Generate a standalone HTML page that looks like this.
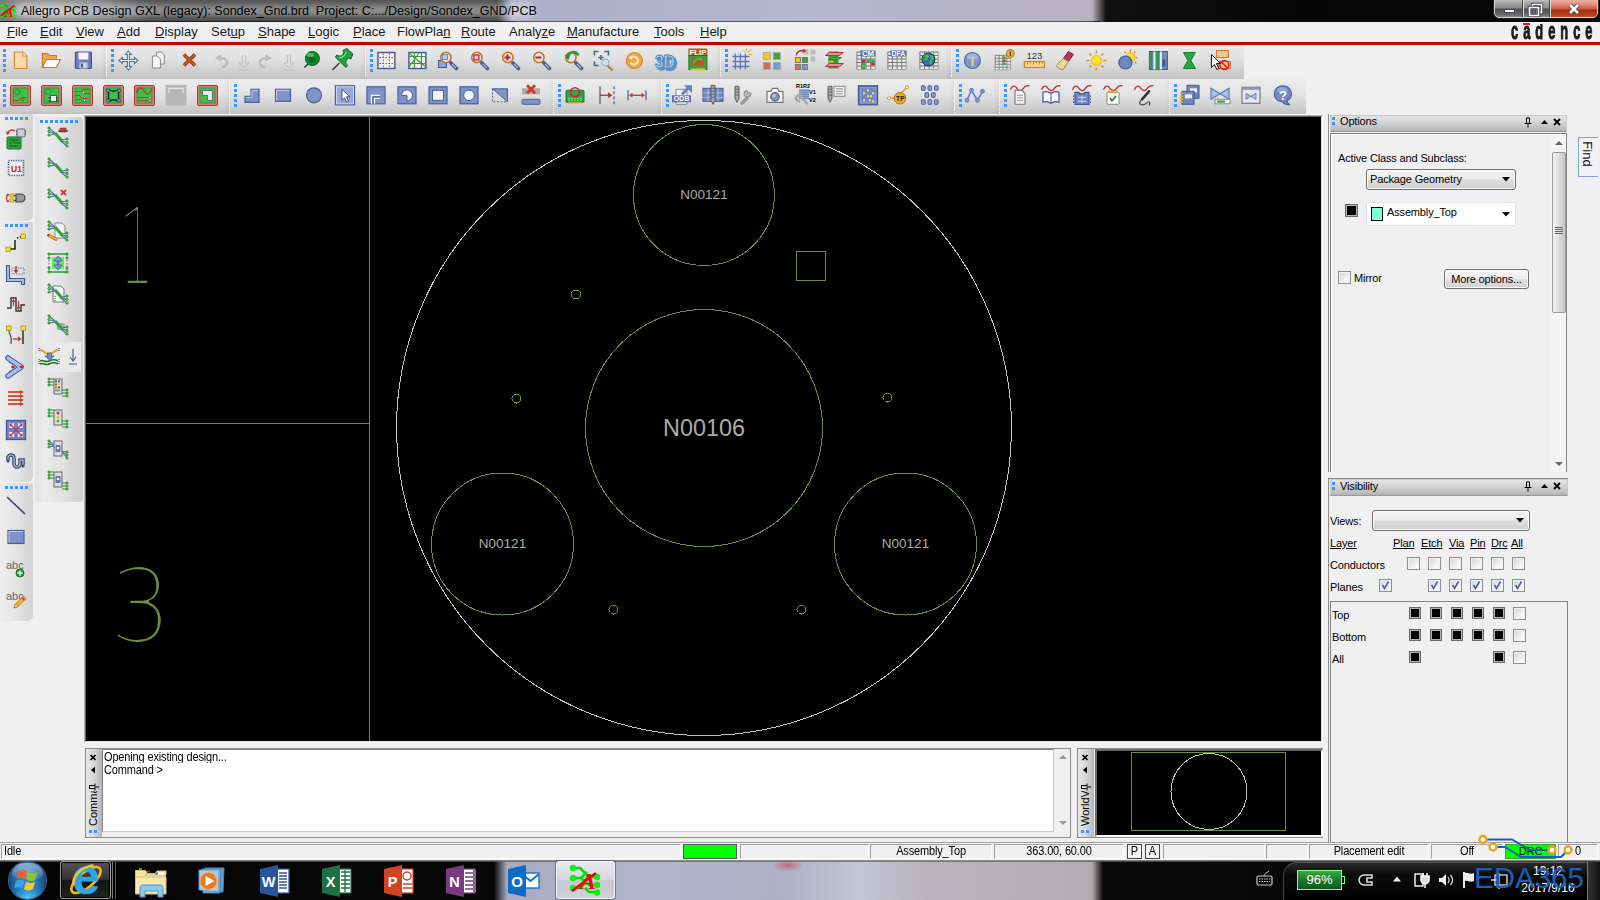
<!DOCTYPE html><html><head><meta charset="utf-8"><title>Allegro PCB Design GXL</title><style>
html,body{margin:0;padding:0}
body{width:1600px;height:900px;overflow:hidden;background:#f0f0f0;position:relative;font-family:"Liberation Sans",sans-serif;font-size:11px;color:#000}
div{position:absolute;box-sizing:border-box}
svg{position:absolute;overflow:visible}
.t{white-space:nowrap;line-height:1}
.tb{background:linear-gradient(#eaeaea,#e2e2e2 45%,#d2d2d2 80%,#c4c4c4);border-radius:3px}
.tbv{background:linear-gradient(90deg,#ededed,#e6e6e6 40%,#d2d2d2);border-radius:3px}
.cap{background:linear-gradient(#e4e4e4,#d0d0d0 50%,#b4b4b4)}
.cb{width:13px;height:13px;border:1px solid #8e8f8f;background:linear-gradient(135deg,#cfd4dc,#f4f6f8 70%);box-shadow:inset 0 0 0 1px #f4f4f4}
.bs{width:12px;height:12px;background:#000;border:1px solid #6a6a6a;box-shadow:inset 0 0 0 1px #b4b4b4}
.u{text-decoration:underline}
.sep{width:2px;border-left:1px solid #a0a0a0;border-right:1px solid #fff}
</style></head><body><div style="left:0px;top:0px;width:1600px;height:22px;background:linear-gradient(90deg,#2e2e2e 0,#2a2a2a 495px,#abadc6 512px,#b0b2cc 640px,#b5b6d0 800px,#b6b4c8 950px,#b8b2c0 1092px,#111 1106px,#050505 1300px,#080808 1600px)"></div><div style="left:0px;top:0px;width:505px;height:22px;background:linear-gradient(#444 0,#3a3a3a 3px,#2e2e2e 10px,#303030 18px,#3c3c3c 21px);-webkit-mask-image:linear-gradient(90deg,#000 490px,transparent 505px);mask-image:linear-gradient(90deg,#000 490px,transparent 505px)"></div><div style="left:-30px;top:-12px;width:190px;height:46px;background:radial-gradient(ellipse at 40% 50%,rgba(255,255,255,.62),rgba(255,255,255,.3) 45%,rgba(255,255,255,0) 70%)"></div><div style="left:14px;top:4px;width:520px;height:13px;background:#fff;filter:blur(4px);border-radius:7px;opacity:.5"></div><div style="left:0px;top:21px;width:1100px;height:1px;background:linear-gradient(90deg,#1a1a1a 500px,#55556a 520px,#55556a 1085px,#111 1100px)"></div><svg style="left:0;top:3px" width="17" height="15.3" viewBox="0 0 20 18"><g stroke="#0c0" stroke-width="2.2" fill="none"><path d="M2 3h5l4 5h6M2 9h6M2 15h6l4-5"/></g><g fill="#1e1"><circle cx="2.5" cy="3" r="2"/><circle cx="2.5" cy="9" r="2"/><circle cx="2.5" cy="15" r="2"/><circle cx="17" cy="5" r="2"/><circle cx="17" cy="15.5" r="2"/><circle cx="17" cy="10" r="2"/></g><path d="M1 15 L17 3" stroke="#e00" stroke-width="2"/><text x="6" y="16" font-family="Liberation Serif,serif" font-style="italic" font-weight="bold" font-size="15" fill="#e01010">A</text></svg><div class="t" style="left:21px;top:2px;width:540px;height:18px;font-size:12.5px;line-height:18px;color:#000">Allegro PCB Design GXL (legacy): Sondex_Gnd.brd&nbsp; Project: C:.../Design/Sondex_GND/PCB</div><div style="left:1494px;top:-1px;width:104px;height:19px;border:1px solid #d0d0d0;border-radius:0 0 5px 5px;background:linear-gradient(#c0c0c0,#a4a4a4 20%,#8a8a8a 48%,#4e4e4e 52%,#6a6a6a 85%,#8a8a8a);overflow:hidden;box-shadow:0 0 0 1px #222"><div style="left:27px;top:0;width:2px;height:19px;background:#ddd;border-left:1px solid #444"></div><div style="left:54px;top:0;width:2px;height:19px;background:#ddd;border-left:1px solid #444"></div><div style="left:56px;top:0;width:47px;height:19px;background:linear-gradient(#f0b0a0,#dc8c78 25%,#c8583e 48%,#a42810 52%,#b8401e 80%,#d87850)"></div><svg style="left:0;top:0" width="104" height="19" viewBox="0 0 104 19"><rect x="9.5" y="9.5" width="10" height="3" fill="#fff" stroke="#445" stroke-width="1"/><g fill="none"><path d="M37.5 4.500h9v8h-9z" stroke="#445" stroke-width="3.4"/><path d="M37.5 4.500h9v8h-9z" stroke="#fff" stroke-width="1.6"/><path d="M34.5 7.500h9v8h-9z" fill="#888" stroke="#445" stroke-width="3.4"/><path d="M34.5 7.500h9v8h-9z" stroke="#fff" stroke-width="1.6"/><rect x="37.5" y="10" width="3" height="3" fill="#777" stroke="#445" stroke-width="1"/></g><path d="M75 5l8 8M83 5l-8 8" stroke="#445" stroke-width="4.4"/><path d="M75 5l8 8M83 5l-8 8" stroke="#fff" stroke-width="2.6"/></svg></div><div style="left:0px;top:22px;width:1600px;height:20px;background:#f0f0f0"></div><div class="t" style="left:7px;top:24px;width:80px;height:16px;font-size:13px;line-height:16px;color:#1a1a1a"><span class="u">F</span>ile</div><div class="t" style="left:40px;top:24px;width:80px;height:16px;font-size:13px;line-height:16px;color:#1a1a1a"><span class="u">E</span>dit</div><div class="t" style="left:76px;top:24px;width:80px;height:16px;font-size:13px;line-height:16px;color:#1a1a1a"><span class="u">V</span>iew</div><div class="t" style="left:117px;top:24px;width:80px;height:16px;font-size:13px;line-height:16px;color:#1a1a1a"><span class="u">A</span>dd</div><div class="t" style="left:155px;top:24px;width:80px;height:16px;font-size:13px;line-height:16px;color:#1a1a1a"><span class="u">D</span>isplay</div><div class="t" style="left:211px;top:24px;width:80px;height:16px;font-size:13px;line-height:16px;color:#1a1a1a">Set<span class="u">u</span>p</div><div class="t" style="left:258px;top:24px;width:80px;height:16px;font-size:13px;line-height:16px;color:#1a1a1a"><span class="u">S</span>hape</div><div class="t" style="left:308px;top:24px;width:80px;height:16px;font-size:13px;line-height:16px;color:#1a1a1a"><span class="u">L</span>ogic</div><div class="t" style="left:353px;top:24px;width:80px;height:16px;font-size:13px;line-height:16px;color:#1a1a1a"><span class="u">P</span>lace</div><div class="t" style="left:397px;top:24px;width:80px;height:16px;font-size:13px;line-height:16px;color:#1a1a1a">FlowPla<span class="u">n</span></div><div class="t" style="left:461px;top:24px;width:80px;height:16px;font-size:13px;line-height:16px;color:#1a1a1a"><span class="u">R</span>oute</div><div class="t" style="left:509px;top:24px;width:80px;height:16px;font-size:13px;line-height:16px;color:#1a1a1a">Analy<span class="u">z</span>e</div><div class="t" style="left:567px;top:24px;width:80px;height:16px;font-size:13px;line-height:16px;color:#1a1a1a"><span class="u">M</span>anufacture</div><div class="t" style="left:654px;top:24px;width:80px;height:16px;font-size:13px;line-height:16px;color:#1a1a1a"><span class="u">T</span>ools</div><div class="t" style="left:700px;top:24px;width:80px;height:16px;font-size:13px;line-height:16px;color:#1a1a1a"><span class="u">H</span>elp</div><div style="left:1510px;top:24px;width:90px;height:17px;overflow:hidden"><div class="t" style="left:1px;top:-3.700px;font-size:16px;line-height:16px;letter-spacing:6.300px;font-weight:bold;color:#1a1a1a;-webkit-text-stroke:.7px #1a1a1a;transform:scale(.8,1.45);transform-origin:0 0">c&#257;dence</div></div><div style="left:1523px;top:23px;width:7px;height:2px;background:#e02020"></div><div style="left:0px;top:42px;width:1600px;height:3px;background:#c80000"></div><div style="left:0px;top:45px;width:1244px;height:34px;background:linear-gradient(#e9e9e9,#e2e2e2 40%,#d0d0d0 75%,#c4c4c4)"></div><div style="left:3px;top:49px;width:3px;height:3px;background:#3d95ff"></div><div style="left:3px;top:54px;width:3px;height:3px;background:#3d95ff"></div><div style="left:3px;top:59px;width:3px;height:3px;background:#3d95ff"></div><div style="left:3px;top:64px;width:3px;height:3px;background:#3d95ff"></div><div style="left:3px;top:69px;width:3px;height:3px;background:#3d95ff"></div><div style="left:111px;top:49px;width:3px;height:3px;background:#3d95ff"></div><div style="left:111px;top:54px;width:3px;height:3px;background:#3d95ff"></div><div style="left:111px;top:59px;width:3px;height:3px;background:#3d95ff"></div><div style="left:111px;top:64px;width:3px;height:3px;background:#3d95ff"></div><div style="left:111px;top:69px;width:3px;height:3px;background:#3d95ff"></div><div style="left:101px;top:45px;width:5px;height:34px;background:linear-gradient(90deg,rgba(0,0,0,0),rgba(0,0,0,.05))"></div><div style="left:106px;top:46px;width:1px;height:32px;background:repeating-linear-gradient(#fff 0 1px,transparent 1px 2px)"></div><div style="left:370px;top:49px;width:3px;height:3px;background:#3d95ff"></div><div style="left:370px;top:54px;width:3px;height:3px;background:#3d95ff"></div><div style="left:370px;top:59px;width:3px;height:3px;background:#3d95ff"></div><div style="left:370px;top:64px;width:3px;height:3px;background:#3d95ff"></div><div style="left:370px;top:69px;width:3px;height:3px;background:#3d95ff"></div><div style="left:360px;top:45px;width:5px;height:34px;background:linear-gradient(90deg,rgba(0,0,0,0),rgba(0,0,0,.05))"></div><div style="left:365px;top:46px;width:1px;height:32px;background:repeating-linear-gradient(#fff 0 1px,transparent 1px 2px)"></div><div style="left:725px;top:49px;width:3px;height:3px;background:#3d95ff"></div><div style="left:725px;top:54px;width:3px;height:3px;background:#3d95ff"></div><div style="left:725px;top:59px;width:3px;height:3px;background:#3d95ff"></div><div style="left:725px;top:64px;width:3px;height:3px;background:#3d95ff"></div><div style="left:725px;top:69px;width:3px;height:3px;background:#3d95ff"></div><div style="left:715px;top:45px;width:5px;height:34px;background:linear-gradient(90deg,rgba(0,0,0,0),rgba(0,0,0,.05))"></div><div style="left:720px;top:46px;width:1px;height:32px;background:repeating-linear-gradient(#fff 0 1px,transparent 1px 2px)"></div><div style="left:956px;top:49px;width:3px;height:3px;background:#3d95ff"></div><div style="left:956px;top:54px;width:3px;height:3px;background:#3d95ff"></div><div style="left:956px;top:59px;width:3px;height:3px;background:#3d95ff"></div><div style="left:956px;top:64px;width:3px;height:3px;background:#3d95ff"></div><div style="left:956px;top:69px;width:3px;height:3px;background:#3d95ff"></div><div style="left:946px;top:45px;width:5px;height:34px;background:linear-gradient(90deg,rgba(0,0,0,0),rgba(0,0,0,.05))"></div><div style="left:951px;top:46px;width:1px;height:32px;background:repeating-linear-gradient(#fff 0 1px,transparent 1px 2px)"></div><div style="left:0px;top:79px;width:1306px;height:35px;background:linear-gradient(#ececec,#e4e4e4 40%,#d2d2d2 75%,#c2c2c2)"></div><div style="left:3px;top:84px;width:3px;height:3px;background:#3d95ff"></div><div style="left:3px;top:89px;width:3px;height:3px;background:#3d95ff"></div><div style="left:3px;top:94px;width:3px;height:3px;background:#3d95ff"></div><div style="left:3px;top:99px;width:3px;height:3px;background:#3d95ff"></div><div style="left:3px;top:104px;width:3px;height:3px;background:#3d95ff"></div><div style="left:234px;top:84px;width:3px;height:3px;background:#3d95ff"></div><div style="left:234px;top:89px;width:3px;height:3px;background:#3d95ff"></div><div style="left:234px;top:94px;width:3px;height:3px;background:#3d95ff"></div><div style="left:234px;top:99px;width:3px;height:3px;background:#3d95ff"></div><div style="left:234px;top:104px;width:3px;height:3px;background:#3d95ff"></div><div style="left:224px;top:79px;width:5px;height:35px;background:linear-gradient(90deg,rgba(0,0,0,0),rgba(0,0,0,.05))"></div><div style="left:229px;top:80px;width:1px;height:33px;background:repeating-linear-gradient(#fff 0 1px,transparent 1px 2px)"></div><div style="left:558px;top:84px;width:3px;height:3px;background:#3d95ff"></div><div style="left:558px;top:89px;width:3px;height:3px;background:#3d95ff"></div><div style="left:558px;top:94px;width:3px;height:3px;background:#3d95ff"></div><div style="left:558px;top:99px;width:3px;height:3px;background:#3d95ff"></div><div style="left:558px;top:104px;width:3px;height:3px;background:#3d95ff"></div><div style="left:548px;top:79px;width:5px;height:35px;background:linear-gradient(90deg,rgba(0,0,0,0),rgba(0,0,0,.05))"></div><div style="left:553px;top:80px;width:1px;height:33px;background:repeating-linear-gradient(#fff 0 1px,transparent 1px 2px)"></div><div style="left:666px;top:84px;width:3px;height:3px;background:#3d95ff"></div><div style="left:666px;top:89px;width:3px;height:3px;background:#3d95ff"></div><div style="left:666px;top:94px;width:3px;height:3px;background:#3d95ff"></div><div style="left:666px;top:99px;width:3px;height:3px;background:#3d95ff"></div><div style="left:666px;top:104px;width:3px;height:3px;background:#3d95ff"></div><div style="left:656px;top:79px;width:5px;height:35px;background:linear-gradient(90deg,rgba(0,0,0,0),rgba(0,0,0,.05))"></div><div style="left:661px;top:80px;width:1px;height:33px;background:repeating-linear-gradient(#fff 0 1px,transparent 1px 2px)"></div><div style="left:959px;top:84px;width:3px;height:3px;background:#3d95ff"></div><div style="left:959px;top:89px;width:3px;height:3px;background:#3d95ff"></div><div style="left:959px;top:94px;width:3px;height:3px;background:#3d95ff"></div><div style="left:959px;top:99px;width:3px;height:3px;background:#3d95ff"></div><div style="left:959px;top:104px;width:3px;height:3px;background:#3d95ff"></div><div style="left:949px;top:79px;width:5px;height:35px;background:linear-gradient(90deg,rgba(0,0,0,0),rgba(0,0,0,.05))"></div><div style="left:954px;top:80px;width:1px;height:33px;background:repeating-linear-gradient(#fff 0 1px,transparent 1px 2px)"></div><div style="left:1004px;top:84px;width:3px;height:3px;background:#3d95ff"></div><div style="left:1004px;top:89px;width:3px;height:3px;background:#3d95ff"></div><div style="left:1004px;top:94px;width:3px;height:3px;background:#3d95ff"></div><div style="left:1004px;top:99px;width:3px;height:3px;background:#3d95ff"></div><div style="left:1004px;top:104px;width:3px;height:3px;background:#3d95ff"></div><div style="left:994px;top:79px;width:5px;height:35px;background:linear-gradient(90deg,rgba(0,0,0,0),rgba(0,0,0,.05))"></div><div style="left:999px;top:80px;width:1px;height:33px;background:repeating-linear-gradient(#fff 0 1px,transparent 1px 2px)"></div><div style="left:1174px;top:84px;width:3px;height:3px;background:#3d95ff"></div><div style="left:1174px;top:89px;width:3px;height:3px;background:#3d95ff"></div><div style="left:1174px;top:94px;width:3px;height:3px;background:#3d95ff"></div><div style="left:1174px;top:99px;width:3px;height:3px;background:#3d95ff"></div><div style="left:1174px;top:104px;width:3px;height:3px;background:#3d95ff"></div><div style="left:1164px;top:79px;width:5px;height:35px;background:linear-gradient(90deg,rgba(0,0,0,0),rgba(0,0,0,.05))"></div><div style="left:1169px;top:80px;width:1px;height:33px;background:repeating-linear-gradient(#fff 0 1px,transparent 1px 2px)"></div><svg style="left:8px;top:49px" width="24" height="24" viewBox="-12 -12 24 24"><g transform="translate(.4,-.5)"><path d="M-6 -8.5h8.5l4 4v12.5h-12.5z" fill="#f7dca6" stroke="#d58a30" stroke-width="1.2"/><path d="M2.5 -8.5v4h4" fill="#fff3d8" stroke="#d58a30" stroke-width="1"/></g></svg><svg style="left:39px;top:49px" width="24" height="24" viewBox="-12 -12 24 24"><g transform="translate(.4,-.5)"><path d="M-9 7v-14h5l2 2h7v3" fill="#f0a850" stroke="#c87820" stroke-width="1.2"/><path d="M-9 7l4 -8h14l-4 8z" fill="#fff" stroke="#c87820" stroke-width="1.2"/></g></svg><svg style="left:71px;top:49px" width="24" height="24" viewBox="-12 -12 24 24"><g transform="translate(.4,-.5)"><rect x="-8" y="-8.5" width="16" height="16.5" rx="1" fill="#6c7fc0" stroke="#44558f" stroke-width="1.2"/><rect x="-5" y="-8" width="10" height="7" fill="#f4f4fa"/><rect x="-4" y="2" width="8" height="6" fill="#c8d0ea"/><rect x="-2.5" y="3" width="2" height="4" fill="#44558f"/></g></svg><svg style="left:116px;top:49px" width="24" height="24" viewBox="-12 -12 24 24"><g transform="translate(.4,-.5)"><path d="M0 -9.5l3 3.5h-2v5h5v-2l3.5 3l-3.5 3v-2h-5v5h2l-3 3.5l-3 -3.5h2v-5h-5v2l-3.5 -3l3.5 -3v2h5v-5h-2z" fill="#e8f0f8" stroke="#52749a" stroke-width="1.1"/></g></svg><svg style="left:146px;top:49px" width="24" height="24" viewBox="-12 -12 24 24"><g transform="translate(.4,-.5)"><path d="M-2 -8.5h5l3 3v9h-8z" fill="#f2f2f2" stroke="#8a8a8a"/><path d="M-6 -4.5h5l3 3v9h-8z" fill="#f8f8f8" stroke="#8a8a8a"/></g></svg><svg style="left:177px;top:49px" width="24" height="24" viewBox="-12 -12 24 24"><g transform="translate(.4,-.5)"><path d="M-5.5 -6l11 11M5.5 -6l-11 11" stroke="#8a3208" stroke-width="3.4"/><path d="M-5.5 -6l11 11M5.5 -6l-11 11" stroke="#d8601c" stroke-width="1.6"/></g></svg><svg style="left:208px;top:49px" width="24" height="24" viewBox="-12 -12 24 24"><g transform="translate(.4,-.5)"><path d="M0 -2.5C5 -3,8 1,6 4S3 6.5,1.5 6.5" fill="none" stroke="#bcbcbc" stroke-width="2.4"/><path d="M-5.5 -2.5l6.5 -4v7.5z" fill="#bcbcbc"/></g></svg><svg style="left:231px;top:49px" width="24" height="24" viewBox="-12 -12 24 24"><g transform="translate(.4,-.5)"><path d="M-1 -5.5v8h-3.5l5 5l5 -5h-3.5v-8M-4.5 9.5h10" fill="none" stroke="#bdbdbd" stroke-width="1"/></g></svg><svg style="left:254px;top:49px" width="24" height="24" viewBox="-12 -12 24 24"><g transform="translate(.4,-.5)"><path d="M0 -2.5C-5 -3,-8 1,-6 4S-3 6.5,-1.5 6.5" fill="none" stroke="#bcbcbc" stroke-width="2.4"/><path d="M5.5 -2.5l-6.5 -4v7.5z" fill="#bcbcbc"/></g></svg><svg style="left:276px;top:49px" width="24" height="24" viewBox="-12 -12 24 24"><g transform="translate(.4,-.5)"><path d="M-1 -5.5v8h-3.5l5 5l5 -5h-3.5v-8M-4.5 9.5h10" fill="none" stroke="#bdbdbd" stroke-width="1"/></g></svg><svg style="left:299px;top:49px" width="24" height="24" viewBox="-12 -12 24 24"><g transform="translate(.4,-.5)"><path d="M-7 7l4 -4" stroke="#333" stroke-width="1.5"/><circle cx="1" cy="-2" r="7" fill="#138a2a" stroke="#0a5c18" stroke-width="1"/><path d="M1 -6a4 4 0 1 0 4 4h-4z" fill="#0c6a1e"/><ellipse cx="-1" cy="-5.5" rx="3.5" ry="2" fill="#6fd080" opacity=".7"/></g></svg><svg style="left:330px;top:49px" width="24" height="24" viewBox="-12 -12 24 24"><g transform="translate(.4,-.5)"><path d="M-10 9.5l7 -7" stroke="#3a3a3a" stroke-width="1.5"/><path d="M-7 -3.5L3.5 7L5 5C2.5 2,3.5 0,6 -2.5L8.5 -1.5L10.5 -6.5L4.5 -12L.5 -10L1.5 -7.5C-.5 -4.5,-2.5 -3.5,-5.5 -5.5Z" fill="#22a040" stroke="#0c6420" stroke-width="1"/><path d="M-3.5 -2.5C0 -3,3 -5,4 -9" fill="none" stroke="#7ad890" stroke-width="1.2"/></g></svg><svg style="left:374px;top:49px" width="24" height="24" viewBox="-12 -12 24 24"><g transform="translate(.4,-.5)"><rect x="-8.5" y="-8" width="17" height="16" fill="#f4eeee" stroke="#44588e" stroke-width="1.4"/><path d="M-7 -3h14M-7 3h14M-3 -7v14M3 -7v14" stroke="#c04040" stroke-width="1" stroke-dasharray="1.5 1.5"/></g></svg><svg style="left:405px;top:49px" width="24" height="24" viewBox="-12 -12 24 24"><g transform="translate(.4,-.5)"><rect x="-8.5" y="-8" width="17" height="16" fill="#f4f4f4" stroke="#44588e" stroke-width="1.4"/><path d="M-8 -4h16M-8 3h16M-3 -8v16M4 -8v16M-8 -7l16 13M-8 6l10 -14" stroke="#3a9a3a" stroke-width="1.2"/></g></svg><svg style="left:436px;top:49px" width="24" height="24" viewBox="-12 -12 24 24"><g transform="translate(.4,-.5)"><rect x="-10" y="0" width="8" height="7" fill="#8fa2d8" stroke="#44588e"/><path d="M2.5 2.5 L8 8" stroke="#4a5f90" stroke-width="3.8" stroke-linecap="round"/><path d="M3.5 3.5 L7.5 7.5" stroke="#a8b8d8" stroke-width="1.2"/><circle cx="-2.5" cy="-3" r="5.2" fill="#e4e4f0" stroke="#c07830" stroke-width="1.6"/><rect x="-6" y="-6" width="5" height="5" fill="#b8c4e8" stroke="#6678b0" stroke-width=".8"/></g></svg><svg style="left:467px;top:49px" width="24" height="24" viewBox="-12 -12 24 24"><g transform="translate(.4,-.5)"><path d="M2.5 2.5 L8 8" stroke="#4a5f90" stroke-width="3.8" stroke-linecap="round"/><path d="M3.5 3.5 L7.5 7.5" stroke="#a8b8d8" stroke-width="1.2"/><circle cx="-2.5" cy="-3" r="5.2" fill="#e4e4f0" stroke="#c07830" stroke-width="1.6"/><rect x="-5.5" y="-5.5" width="5" height="5" fill="#f4c8c8" stroke="#c02020" stroke-width="1.2"/></g></svg><svg style="left:498px;top:49px" width="24" height="24" viewBox="-12 -12 24 24"><g transform="translate(.4,-.5)"><path d="M2.5 2.5 L8 8" stroke="#4a5f90" stroke-width="3.8" stroke-linecap="round"/><path d="M3.5 3.5 L7.5 7.5" stroke="#a8b8d8" stroke-width="1.2"/><circle cx="-2.5" cy="-3" r="5.2" fill="#e4e4f0" stroke="#c07830" stroke-width="1.6"/><path d="M-6 -3h6M-3 -6v6" stroke="#c82020" stroke-width="2"/></g></svg><svg style="left:529px;top:49px" width="24" height="24" viewBox="-12 -12 24 24"><g transform="translate(.4,-.5)"><path d="M2.5 2.5 L8 8" stroke="#4a5f90" stroke-width="3.8" stroke-linecap="round"/><path d="M3.5 3.5 L7.5 7.5" stroke="#a8b8d8" stroke-width="1.2"/><circle cx="-2.5" cy="-3" r="5.2" fill="#e4e4f0" stroke="#c07830" stroke-width="1.6"/><path d="M-6 -3h6" stroke="#c82020" stroke-width="2"/></g></svg><svg style="left:561px;top:49px" width="24" height="24" viewBox="-12 -12 24 24"><g transform="translate(.4,-.5)"><path d="M2.5 2.5 L8 8" stroke="#4a5f90" stroke-width="3.8" stroke-linecap="round"/><path d="M3.5 3.5 L7.5 7.5" stroke="#a8b8d8" stroke-width="1.2"/><circle cx="-2.5" cy="-3" r="5.2" fill="#e4e4f0" stroke="#c07830" stroke-width="1.6"/><path d="M-6 -2c0 -6,8 -9,11 -3" fill="none" stroke="#2a9a3a" stroke-width="2.6"/><path d="M-9 -5l6 -1l-2 6z" fill="#2a9a3a"/></g></svg><svg style="left:591px;top:49px" width="24" height="24" viewBox="-12 -12 24 24"><g transform="translate(.4,-.5)"><path d="M-9 -5v-4h4M1 -9h4v4M-9 1v4h4" fill="none" stroke="#44688e" stroke-width="1.6"/><path d="M-5 -3h5M-2.5 -5.5v5" stroke="#44688e" stroke-width="1.4"/><path d="M4 5l5 5" stroke="#c87820" stroke-width="2"/><circle cx="2" cy="2" r="3.6" fill="#cfe0f4" stroke="#8ab" stroke-width="1"/></g></svg><svg style="left:622px;top:49px" width="24" height="24" viewBox="-12 -12 24 24"><g transform="translate(.4,-.5)"><circle cx="0" cy="0" r="8" fill="#f4a440" stroke="#e08820" stroke-width="1.2"/><path d="M-3 -3a4 4 0 1 1 -1 5" fill="none" stroke="#fff0d8" stroke-width="2"/><path d="M-6 -3.5l5 -1l-2 4z" fill="#fff0d8"/></g></svg><svg style="left:653px;top:49px" width="24" height="24" viewBox="-12 -12 24 24"><g transform="translate(.4,-.5)"><text x="-8.5" y="9.5" font-family="Liberation Sans,sans-serif" font-weight="bold" font-size="19" textLength="20" lengthAdjust="spacingAndGlyphs" fill="#6a9cc8" stroke="#5a8cb8" stroke-width="1.5">3D</text><text x="-10.5" y="7.5" font-family="Liberation Sans,sans-serif" font-weight="bold" font-size="19" textLength="20" lengthAdjust="spacingAndGlyphs" fill="#b8d4f0" stroke="#4a86c0" stroke-width="1">3D</text></g></svg><svg style="left:685px;top:49px" width="24" height="24" viewBox="-12 -12 24 24"><g transform="translate(.4,-.5)"><rect x="-9" y="-12" width="19" height="7" fill="#b85a10"/><text x="-8" y="-6" font-family="Liberation Sans,sans-serif" font-weight="bold" font-size="7" textLength="17" lengthAdjust="spacingAndGlyphs" fill="#fff">FLIP</text><rect x="-8.5" y="-5" width="18" height="14" fill="#2fa840" stroke="#18702a"/><rect x="-6" y="-3" width="13" height="8" fill="#c05030"/><path d="M-4 3c1 -5,6 -5,9 -4" stroke="#3c3" stroke-width="2" fill="none"/><rect x="-7" y="8" width="15" height="2" fill="#f0c020"/></g></svg><svg style="left:729px;top:49px" width="24" height="24" viewBox="-12 -12 24 24"><g transform="translate(.4,-.5)"><path d="M-9 -4h17M-9 1h17M-9 6h17M-6 -7v16M-1 -7v16M4 -7v16" stroke="#5a74b8" stroke-width="1.3"/><path d="M6 -8l4 -3M7 -6h4M5 -9v-3M4 -8l-2 -2" stroke="#f0a020" stroke-width="1"/></g></svg><svg style="left:760px;top:49px" width="24" height="24" viewBox="-12 -12 24 24"><g transform="translate(.4,-.5)"><rect x="-9" y="-8" width="7" height="7" fill="#f8c818" stroke="#aaa"/><rect x="1" y="-8" width="7" height="7" fill="#38a838" stroke="#aaa"/><rect x="-9" y="2" width="7" height="7" fill="#d07048" stroke="#aaa"/><rect x="1" y="2" width="7" height="7" fill="#7a98d8" stroke="#aaa"/></g></svg><svg style="left:791px;top:49px" width="24" height="24" viewBox="-12 -12 24 24"><g transform="translate(.4,-.5)"><rect x="0" y="-11" width="5" height="5" fill="#bbb"/><rect x="7" y="-11" width="5" height="5" fill="#bbb"/><rect x="7" y="-4" width="5" height="5" fill="#bbb"/><rect x="-8" y="-3" width="5" height="5" fill="#f8c818" stroke="#777"/><rect x="-1" y="-3" width="5" height="5" fill="#38a838" stroke="#777"/><rect x="-8" y="4" width="5" height="5" fill="#d07048" stroke="#777"/><rect x="-1" y="4" width="5" height="5" fill="#7a98d8" stroke="#777"/><path d="M-7 -5c0 -4,4 -5,7 -5" fill="none" stroke="#c03030" stroke-width="1.4"/><path d="M0 -12l3 2.5l-4 2z" fill="#c03030"/></g></svg><svg style="left:822px;top:49px" width="24" height="24" viewBox="-12 -12 24 24"><g transform="translate(.4,-.5)"><path d="M-6 -9h10v17h-10z" fill="#2fa23a"/><path d="M-9 -5l4 -3h14l-4 3zM-9 6l4 -3h14l-4 3z" fill="#e89090" stroke="#b03838" stroke-width="1"/><path d="M-6 -1l3 -2h10l-3 2z" fill="#58c058" stroke="#208028"/><rect x="-5" y="0" width="4" height="2" fill="#f0c020"/></g></svg><svg style="left:853px;top:49px" width="24" height="24" viewBox="-12 -12 24 24"><g transform="translate(.4,-.5)"><rect x="-9" y="-9" width="19" height="18" fill="#777"/><rect x="-8.0" y="-8.0" width="3.6" height="2.5" fill="#e8e8e8"/><rect x="-3.4" y="-8.0" width="3.6" height="2.5" fill="#e8e8e8"/><rect x="1.2" y="-8.0" width="3.6" height="2.5" fill="#e8e8e8"/><rect x="5.8" y="-8.0" width="3.6" height="2.5" fill="#e8e8e8"/><rect x="-8.0" y="-4.5" width="3.6" height="2.5" fill="#e8e8e8"/><rect x="-3.4" y="-4.5" width="3.6" height="2.5" fill="#e8e8e8"/><rect x="1.2" y="-4.5" width="3.6" height="2.5" fill="#e8e8e8"/><rect x="5.8" y="-4.5" width="3.6" height="2.5" fill="#e8e8e8"/><rect x="-8.0" y="-1.0" width="3.6" height="2.5" fill="#e8e8e8"/><rect x="-3.4" y="-1.0" width="3.6" height="2.5" fill="#e8e8e8"/><rect x="1.2" y="-1.0" width="3.6" height="2.5" fill="#e8e8e8"/><rect x="5.8" y="-1.0" width="3.6" height="2.5" fill="#e8e8e8"/><rect x="-8.0" y="2.5" width="3.6" height="2.5" fill="#e8e8e8"/><rect x="-3.4" y="2.5" width="3.6" height="2.5" fill="#e8e8e8"/><rect x="1.2" y="2.5" width="3.6" height="2.5" fill="#e8e8e8"/><rect x="5.8" y="2.5" width="3.6" height="2.5" fill="#e8e8e8"/><rect x="-8.0" y="6.0" width="3.6" height="2.5" fill="#e8e8e8"/><rect x="-3.4" y="6.0" width="3.6" height="2.5" fill="#e8e8e8"/><rect x="1.2" y="6.0" width="3.6" height="2.5" fill="#e8e8e8"/><rect x="5.8" y="6.0" width="3.6" height="2.5" fill="#e8e8e8"/><rect x="-5" y="-10" width="15" height="6" fill="#5a6ea8"/><text x="-3.5" y="-4.6" font-family="Liberation Sans,sans-serif" font-weight="bold" font-size="6.5" textLength="12" lengthAdjust="spacingAndGlyphs" fill="#fff">CM</text><rect x="-3.4" y="-1" width="3.6" height="2.5" fill="#e02020"/><rect x="5.8" y="2.5" width="3.6" height="2.5" fill="#e02020"/><rect x="1.2" y="-1" width="3.6" height="2.5" fill="#30b040"/><rect x="-3.4" y="2.5" width="3.6" height="2.5" fill="#30b040"/><rect x="-3.4" y="6" width="3.6" height="2.5" fill="#30b040"/><rect x="5.8" y="-1" width="3.6" height="2.5" fill="#30b040"/></g></svg><svg style="left:884px;top:49px" width="24" height="24" viewBox="-12 -12 24 24"><g transform="translate(.4,-.5)"><rect x="-9" y="-9" width="19" height="18" fill="#777"/><rect x="-8.0" y="-8.0" width="3.6" height="2.5" fill="#e8e8e8"/><rect x="-3.4" y="-8.0" width="3.6" height="2.5" fill="#e8e8e8"/><rect x="1.2" y="-8.0" width="3.6" height="2.5" fill="#e8e8e8"/><rect x="5.8" y="-8.0" width="3.6" height="2.5" fill="#e8e8e8"/><rect x="-8.0" y="-4.5" width="3.6" height="2.5" fill="#e8e8e8"/><rect x="-3.4" y="-4.5" width="3.6" height="2.5" fill="#e8e8e8"/><rect x="1.2" y="-4.5" width="3.6" height="2.5" fill="#e8e8e8"/><rect x="5.8" y="-4.5" width="3.6" height="2.5" fill="#e8e8e8"/><rect x="-8.0" y="-1.0" width="3.6" height="2.5" fill="#e8e8e8"/><rect x="-3.4" y="-1.0" width="3.6" height="2.5" fill="#e8e8e8"/><rect x="1.2" y="-1.0" width="3.6" height="2.5" fill="#e8e8e8"/><rect x="5.8" y="-1.0" width="3.6" height="2.5" fill="#e8e8e8"/><rect x="-8.0" y="2.5" width="3.6" height="2.5" fill="#e8e8e8"/><rect x="-3.4" y="2.5" width="3.6" height="2.5" fill="#e8e8e8"/><rect x="1.2" y="2.5" width="3.6" height="2.5" fill="#e8e8e8"/><rect x="5.8" y="2.5" width="3.6" height="2.5" fill="#e8e8e8"/><rect x="-8.0" y="6.0" width="3.6" height="2.5" fill="#e8e8e8"/><rect x="-3.4" y="6.0" width="3.6" height="2.5" fill="#e8e8e8"/><rect x="1.2" y="6.0" width="3.6" height="2.5" fill="#e8e8e8"/><rect x="5.8" y="6.0" width="3.6" height="2.5" fill="#e8e8e8"/><rect x="-6" y="-10" width="16" height="6" fill="#5a6ea8"/><text x="-5" y="-4.6" font-family="Liberation Sans,sans-serif" font-weight="bold" font-size="6.5" textLength="14" lengthAdjust="spacingAndGlyphs" fill="#fff">DFA</text></g></svg><svg style="left:916px;top:49px" width="24" height="24" viewBox="-12 -12 24 24"><g transform="translate(.4,-.5)"><rect x="-9" y="-9" width="19" height="18" fill="#777"/><rect x="-8.0" y="-8.0" width="3.6" height="2.5" fill="#e8e8e8"/><rect x="-3.4" y="-8.0" width="3.6" height="2.5" fill="#e8e8e8"/><rect x="1.2" y="-8.0" width="3.6" height="2.5" fill="#e8e8e8"/><rect x="5.8" y="-8.0" width="3.6" height="2.5" fill="#e8e8e8"/><rect x="-8.0" y="-4.5" width="3.6" height="2.5" fill="#e8e8e8"/><rect x="-3.4" y="-4.5" width="3.6" height="2.5" fill="#e8e8e8"/><rect x="1.2" y="-4.5" width="3.6" height="2.5" fill="#e8e8e8"/><rect x="5.8" y="-4.5" width="3.6" height="2.5" fill="#e8e8e8"/><rect x="-8.0" y="-1.0" width="3.6" height="2.5" fill="#e8e8e8"/><rect x="-3.4" y="-1.0" width="3.6" height="2.5" fill="#e8e8e8"/><rect x="1.2" y="-1.0" width="3.6" height="2.5" fill="#e8e8e8"/><rect x="5.8" y="-1.0" width="3.6" height="2.5" fill="#e8e8e8"/><rect x="-8.0" y="2.5" width="3.6" height="2.5" fill="#e8e8e8"/><rect x="-3.4" y="2.5" width="3.6" height="2.5" fill="#e8e8e8"/><rect x="1.2" y="2.5" width="3.6" height="2.5" fill="#e8e8e8"/><rect x="5.8" y="2.5" width="3.6" height="2.5" fill="#e8e8e8"/><rect x="-8.0" y="6.0" width="3.6" height="2.5" fill="#e8e8e8"/><rect x="-3.4" y="6.0" width="3.6" height="2.5" fill="#e8e8e8"/><rect x="1.2" y="6.0" width="3.6" height="2.5" fill="#e8e8e8"/><rect x="5.8" y="6.0" width="3.6" height="2.5" fill="#e8e8e8"/><circle cx="0" cy="-1" r="6.5" fill="#3a68b8" stroke="#234"/><path d="M-4 -4c2 -2,4 -1,3 1s-3 1,-3 3M2 -5c2 1,3 3,1 5s-1 3,0 3" fill="none" stroke="#3c3" stroke-width="2"/></g></svg><svg style="left:960px;top:49px" width="24" height="24" viewBox="-12 -12 24 24"><g transform="translate(.4,-.5)"><circle cx="0" cy="0" r="8" fill="#8098d0" stroke="#5068a8" stroke-width="1.2"/><ellipse cx="0" cy="-4" rx="5.5" ry="3" fill="#b8c8ea" opacity=".7"/><text x="-2" y="5" font-family="Liberation Sans,sans-serif" font-weight="bold" font-size="13" fill="#f8e020">i</text></g></svg><svg style="left:991px;top:49px" width="24" height="24" viewBox="-12 -12 24 24"><g transform="translate(.4,-.5)"><g transform="translate(-1,2) scale(.85)"><rect x="-9" y="-9" width="19" height="18" fill="#777"/><rect x="-8.0" y="-8.0" width="3.6" height="2.5" fill="#e8e8e8"/><rect x="-3.4" y="-8.0" width="3.6" height="2.5" fill="#e8e8e8"/><rect x="1.2" y="-8.0" width="3.6" height="2.5" fill="#e8e8e8"/><rect x="5.8" y="-8.0" width="3.6" height="2.5" fill="#e8e8e8"/><rect x="-8.0" y="-4.5" width="3.6" height="2.5" fill="#e8e8e8"/><rect x="-3.4" y="-4.5" width="3.6" height="2.5" fill="#e8e8e8"/><rect x="1.2" y="-4.5" width="3.6" height="2.5" fill="#e8e8e8"/><rect x="5.8" y="-4.5" width="3.6" height="2.5" fill="#e8e8e8"/><rect x="-8.0" y="-1.0" width="3.6" height="2.5" fill="#e8e8e8"/><rect x="-3.4" y="-1.0" width="3.6" height="2.5" fill="#e8e8e8"/><rect x="1.2" y="-1.0" width="3.6" height="2.5" fill="#e8e8e8"/><rect x="5.8" y="-1.0" width="3.6" height="2.5" fill="#e8e8e8"/><rect x="-8.0" y="2.5" width="3.6" height="2.5" fill="#e8e8e8"/><rect x="-3.4" y="2.5" width="3.6" height="2.5" fill="#e8e8e8"/><rect x="1.2" y="2.5" width="3.6" height="2.5" fill="#e8e8e8"/><rect x="5.8" y="2.5" width="3.6" height="2.5" fill="#e8e8e8"/><rect x="-8.0" y="6.0" width="3.6" height="2.5" fill="#e8e8e8"/><rect x="-3.4" y="6.0" width="3.6" height="2.5" fill="#e8e8e8"/><rect x="1.2" y="6.0" width="3.6" height="2.5" fill="#e8e8e8"/><rect x="5.8" y="6.0" width="3.6" height="2.5" fill="#e8e8e8"/></g><rect x="-1" y="-1" width="3.2" height="2.2" fill="#e02020"/><rect x="-1" y="-4" width="3.2" height="2.2" fill="#30b040"/><rect x="-1" y="2" width="3.2" height="2.2" fill="#30b040"/><circle cx="7" cy="-7" r="4" fill="#f0b020" stroke="#b07810"/><text x="5.8" y="-4.3" font-family="Liberation Sans,sans-serif" font-weight="bold" font-size="7" fill="#222">i</text></g></svg><svg style="left:1022px;top:49px" width="24" height="24" viewBox="-12 -12 24 24"><g transform="translate(.4,-.5)"><text x="-8" y="-2" font-family="Liberation Sans,sans-serif" font-size="9" textLength="16" lengthAdjust="spacingAndGlyphs" fill="#333">123</text><rect x="-10" y="1" width="20" height="6" fill="#f8d888" stroke="#d08820" stroke-width="1.2"/><path d="M-7 1v3M-4 1v2M-1 1v3M2 1v2M5 1v3M8 1v2" stroke="#b07010" stroke-width=".8"/></g></svg><svg style="left:1053px;top:49px" width="24" height="24" viewBox="-12 -12 24 24"><g transform="translate(.4,-.5)"><path d="M3 -9l5 3l-5 7l-5 -3z" fill="#c03060" stroke="#802040"/><path d="M-2 -2l5 3l-5 8c-3 0,-6 -2,-7 -4z" fill="#f0d890" stroke="#a08840"/></g></svg><svg style="left:1084px;top:49px" width="24" height="24" viewBox="-12 -12 24 24"><g transform="translate(.4,-.5)"><g stroke="#e08820" stroke-width="1.4"><path d="M0 -10v3M0 7v3M-10 0h3M7 0h3M-7 -7l2 2M5 5l2 2M-7 7l2 -2M5 -5l2 -2"/></g><circle cx="0" cy="0" r="5" fill="#ffe020" stroke="#f0b020"/></g></svg><svg style="left:1115px;top:49px" width="24" height="24" viewBox="-12 -12 24 24"><g transform="translate(.4,-.5)"><g stroke="#e08820" stroke-width="1.4"><path d="M3 -11v3M10 -3h-2M8 -9l-1.5 1.5M-3 -9l1.5 1.5M9 3l-1.5 -1.5"/></g><circle cx="3" cy="-3" r="4.5" fill="#ffe020" stroke="#f0b020"/><circle cx="-2" cy="2" r="6.5" fill="#7088c0" stroke="#44588e" stroke-width="1.2"/></g></svg><svg style="left:1146px;top:49px" width="24" height="24" viewBox="-12 -12 24 24"><g transform="translate(.4,-.5)"><rect x="-9" y="-9" width="18" height="18" fill="#7088c0" stroke="#44588e"/><rect x="-8" y="-9" width="2" height="18" fill="#2a9a3a"/><rect x="-5" y="-9" width="2" height="18" fill="#dfe8f8"/><rect x="-2" y="-9" width="2.5" height="18" fill="#2a9a3a"/><rect x="1.5" y="-9" width="2" height="18" fill="#dfe8f8"/><rect x="4" y="-1" width="3" height="7" fill="#44588e"/></g></svg><svg style="left:1177px;top:49px" width="24" height="24" viewBox="-12 -12 24 24"><g transform="translate(.4,-.5)"><path d="M-6 -8h12l-4.5 8l4.5 8h-12l4.5 -8z" fill="#2aa840" stroke="#187a2a" stroke-width="1"/></g></svg><svg style="left:1208px;top:49px" width="24" height="24" viewBox="-12 -12 24 24"><g transform="translate(.4,-.5)"><rect x="-4" y="-10" width="12" height="7" fill="#f0c890" stroke="#c87830"/><rect x="-2" y="1" width="12" height="7" fill="#f0c890" stroke="#c87830"/><circle cx="4" cy="4.5" r="4.5" fill="none" stroke="#f01010" stroke-width="1.4"/><path d="M1 1.5l6 6" stroke="#f01010" stroke-width="1.4"/><path d="M-9 -6v13l3 -3l2.5 5l2 -1l-2.5 -5h4z" fill="#fff" stroke="#111" stroke-width="1"/></g></svg><svg style="left:8px;top:84px" width="24" height="24" viewBox="-12 -12 24 24"><g transform="translate(0,-.7)"><g transform="translate(.5,.2)"><rect x="-10" y="-10" width="20" height="20" rx="1.5" fill="#e47878" stroke="#a83838" stroke-width="1"/><rect x="-7.5" y="-7.5" width="15" height="15" fill="#3fbf49" stroke="#2a9a34" stroke-width="1"/><circle cx="-3.5" cy="-3.5" r="2.8" fill="none" stroke="#164" stroke-width="1" stroke-dasharray="1.2 1"/><path d="M-7 5h5l3 -3h5" stroke="#b04040" stroke-width="1" fill="none"/><circle cx="2" cy="4" r="1.3" fill="none" stroke="#b04040"/></g></g></svg><svg style="left:39px;top:84px" width="24" height="24" viewBox="-12 -12 24 24"><g transform="translate(0,-.7)"><g transform="translate(.5,.2)"><rect x="-10" y="-10" width="20" height="20" rx="1.5" fill="#e47878" stroke="#a83838" stroke-width="1"/><rect x="-7.5" y="-7.5" width="15" height="15" fill="#3fbf49" stroke="#2a9a34" stroke-width="1"/><circle cx="-3.5" cy="-3.5" r="2.8" fill="none" stroke="#164" stroke-width="1" stroke-dasharray="1.2 1"/><rect x="-1" y="0" width="6" height="6" fill="#e8e8f0" stroke="#556"/><path d="M-3 2l2 1M-3 6l2 -1M7 2l-2 1M7 6l-2 -1" stroke="#222" stroke-width="1"/></g></g></svg><svg style="left:70px;top:84px" width="24" height="24" viewBox="-12 -12 24 24"><g transform="translate(0,-.7)"><g transform="translate(.5,.2)"><rect x="-10" y="-10" width="20" height="20" rx="1.5" fill="#e47878" stroke="#a83838" stroke-width="1"/><rect x="-7.5" y="-7.5" width="15" height="15" fill="#3fbf49" stroke="#2a9a34" stroke-width="1"/><path d="M-7 -4h5l3 -2h6M-7 0h4l3 3h6M-7 4h5l2 2h4M2 -2h5" stroke="#b04040" stroke-width="1" fill="none"/><circle cx="1" cy="-3" r="1" fill="#efe" stroke="#b04040" stroke-width=".7"/><circle cx="2" cy="5" r="1" fill="#efe" stroke="#b04040" stroke-width=".7"/></g></g></svg><svg style="left:101px;top:84px" width="24" height="24" viewBox="-12 -12 24 24"><g transform="translate(0,-.7)"><g transform="translate(.5,.2)"><rect x="-10" y="-10" width="20" height="20" rx="1.5" fill="#e47878" stroke="#a83838" stroke-width="1"/><rect x="-7.5" y="-7.5" width="15" height="15" fill="#3fbf49" stroke="#2a9a34" stroke-width="1"/><path d="M-5 -6c3 2,7 2,10 0M-5 6c3 -2,7 -2,10 0M-5 -4v8M5 -4v8" fill="none" stroke="#123" stroke-width="1.5"/><g fill="#8098d0" stroke="#234" stroke-width=".6"><circle cx="-5.5" cy="-5" r="1.6"/><circle cx="5.5" cy="-5" r="1.6"/><circle cx="-5.5" cy="5" r="1.6"/><circle cx="5.5" cy="5" r="1.6"/></g></g></g></svg><svg style="left:132px;top:84px" width="24" height="24" viewBox="-12 -12 24 24"><g transform="translate(0,-.7)"><g transform="translate(.5,.2)"><rect x="-10" y="-10" width="20" height="20" rx="1.5" fill="#e47878" stroke="#a83838" stroke-width="1"/><rect x="-7.5" y="-7.5" width="15" height="15" fill="#3fbf49" stroke="#2a9a34" stroke-width="1"/><path d="M-8 -3c3 -6,5 -6,8 -1s5 2,8 -4" fill="none" stroke="#c03030" stroke-width="1.2"/><path d="M-7 2h11M-7 5h11" stroke="#b04040" stroke-width="1"/><circle cx="5.5" cy="2" r="1" fill="#efe" stroke="#b04040" stroke-width=".7"/><circle cx="5.5" cy="5" r="1" fill="#efe" stroke="#b04040" stroke-width=".7"/></g></g></svg><svg style="left:164px;top:84px" width="24" height="24" viewBox="-12 -12 24 24"><g transform="translate(0,-.7)"><rect x="-10.5" y="-10.5" width="21" height="21" rx="1" fill="#b8b8b8"/><path d="M-7 -2v-5h14v5" fill="none" stroke="#e8e8e8" stroke-width="1.2"/></g></svg><svg style="left:195px;top:84px" width="24" height="24" viewBox="-12 -12 24 24"><g transform="translate(0,-.7)"><g transform="translate(.5,.2)"><rect x="-10" y="-10" width="20" height="20" rx="1.5" fill="#e47878" stroke="#a83838" stroke-width="1"/><rect x="-7.5" y="-7.5" width="15" height="15" fill="#3fbf49" stroke="#2a9a34" stroke-width="1"/><path d="M-5 -5h10v10h-5v-5h-5z" fill="#e8e8ec" stroke="#667" stroke-width="1"/></g></g></svg><svg style="left:240px;top:84px" width="24" height="24" viewBox="-12 -12 24 24"><g transform="translate(0,-.7)"><path d="M-7 7v-6h6v-7h8v13z" fill="#7f93c8" stroke="#4a5f9a" stroke-width="1.2"/><path d="M-6 2h6v-7h6" fill="none" stroke="#c4d0ee" stroke-width="1"/></g></svg><svg style="left:271px;top:84px" width="24" height="24" viewBox="-12 -12 24 24"><g transform="translate(0,-.7)"><rect x="-7.5" y="-6" width="15" height="12" fill="#7f93c8" stroke="#4a5f9a" stroke-width="1.2"/><path d="M-6.5 5v-10h13" fill="none" stroke="#c4d0ee" stroke-width="1"/></g></svg><svg style="left:302px;top:84px" width="24" height="24" viewBox="-12 -12 24 24"><g transform="translate(0,-.7)"><circle cx="0" cy="0" r="7.5" fill="#7f93c8" stroke="#4a5f9a" stroke-width="1.2"/></g></svg><svg style="left:333px;top:84px" width="24" height="24" viewBox="-12 -12 24 24"><g transform="translate(0,-.7)"><rect x="-9.5" y="-9.5" width="19" height="19" fill="#96a8dc" stroke="#4a5f9a" stroke-width="1.3"/><rect x="-8.5" y="-8.5" width="17" height="17" fill="none" stroke="#c8d4f0" stroke-width="1"/><path d="M-3 -6v11l2.5 -2.5l2 4.5l2 -1l-2 -4.5h3.5z" fill="#fff" stroke="#445" stroke-width=".9"/></g></svg><svg style="left:364px;top:84px" width="24" height="24" viewBox="-12 -12 24 24"><g transform="translate(0,-.7)"><rect x="-9" y="-8.5" width="18" height="17" fill="#7f93c8" stroke="#4a5f9a" stroke-width="1.2"/><path d="M-4.5 8.5v-8.5h8.5M-1.5 8.5v-5.5h5.5" fill="none" stroke="#fff" stroke-width="1.3"/><path d="M-3 8.5v-7h7" fill="none" stroke="#4a5f9a" stroke-width="1"/></g></svg><svg style="left:395px;top:84px" width="24" height="24" viewBox="-12 -12 24 24"><g transform="translate(0,-.7)"><rect x="-9" y="-8.5" width="18" height="17" fill="#7f93c8" stroke="#4a5f9a" stroke-width="1.2"/><path d="M0 0v5.5a5.5 5.5 0 1 0 -5.5 -5.5z" fill="#fff" stroke="#4a5f9a" stroke-width="1"/></g></svg><svg style="left:426px;top:84px" width="24" height="24" viewBox="-12 -12 24 24"><g transform="translate(0,-.7)"><rect x="-9" y="-8.5" width="18" height="17" fill="#7f93c8" stroke="#4a5f9a" stroke-width="1.2"/><rect x="-5.5" y="-5" width="11" height="10" fill="#f4f4f8" stroke="#4a5f9a" stroke-width="1"/></g></svg><svg style="left:457px;top:84px" width="24" height="24" viewBox="-12 -12 24 24"><g transform="translate(0,-.7)"><rect x="-9" y="-8.5" width="18" height="17" fill="#7f93c8" stroke="#4a5f9a" stroke-width="1.2"/><circle cx="0" cy="0" r="5.3" fill="#f4f4f8" stroke="#4a5f9a" stroke-width="1"/></g></svg><svg style="left:488px;top:84px" width="24" height="24" viewBox="-12 -12 24 24"><g transform="translate(0,-.7)"><path d="M-7.5 -6.5h15v13z" fill="#7f93c8" stroke="#4a5f9a" stroke-width="1"/><path d="M-7.5 -6.5v13h15" fill="none" stroke="#4a5f9a" stroke-width="1" stroke-dasharray="2 1.5"/></g></svg><svg style="left:519px;top:84px" width="24" height="24" viewBox="-12 -12 24 24"><g transform="translate(0,-.7)"><rect x="-9" y="-7" width="18" height="6" fill="#aaa"/><path d="M-4 -10l8 8M4 -10l-8 8" stroke="#d03828" stroke-width="2.8"/><rect x="-9" y="4" width="18" height="5" rx="1" fill="#7f93c8" stroke="#4a5f9a" stroke-width="1"/></g></svg><svg style="left:563px;top:84px" width="24" height="24" viewBox="-12 -12 24 24"><g transform="translate(0,-.7)"><rect x="-9" y="-5" width="18" height="12" rx="1" fill="#2fa840" stroke="#18702a"/><path d="M-7 3h14M-7 5h14" stroke="#9e9" stroke-width=".8" stroke-dasharray="2 1"/><rect x="-7" y="7" width="14" height="1.5" fill="#f0c020"/><circle cx="0" cy="-3" r="4.5" fill="none" stroke="#d02030" stroke-width="1.5"/></g></svg><svg style="left:594px;top:84px" width="24" height="24" viewBox="-12 -12 24 24"><g transform="translate(0,-.7)"><path d="M-6 -9v18" stroke="#555" stroke-width="1.2"/><path d="M8 -9v18" stroke="#44588e" stroke-width="1.2" stroke-dasharray="3 2"/><path d="M-6 0h9" stroke="#c03838" stroke-width="1.4"/><path d="M2 -3l4.5 3l-4.5 3z" fill="#c03838"/></g></svg><svg style="left:625px;top:84px" width="24" height="24" viewBox="-12 -12 24 24"><g transform="translate(0,-.7)"><path d="M-9 -5v10M9 -5v10" stroke="#44588e" stroke-width="1.2"/><path d="M-6 0h12" stroke="#c03838" stroke-width="1.3"/><path d="M-4.5 -2.5l-3.5 2.5l3.5 2.5zM4.5 -2.5l3.5 2.5l-3.5 2.5z" fill="#c03838"/></g></svg><svg style="left:670px;top:84px" width="24" height="24" viewBox="-12 -12 24 24"><g transform="translate(0,-.7)"><path d="M-6 -6h11v15h-11z" fill="#f0f0f0" stroke="#888"/><path d="M0 -1l6 -6" stroke="#6880c0" stroke-width="3"/><path d="M2 -10h8v8z" fill="#6880c0"/><rect x="-10" y="0" width="19" height="7" fill="#5a70b0"/><text x="-8.5" y="6" font-family="Liberation Sans,sans-serif" font-weight="bold" font-size="6.5" textLength="16" lengthAdjust="spacingAndGlyphs" fill="#fff">ODB</text></g></svg><svg style="left:701px;top:84px" width="24" height="24" viewBox="-12 -12 24 24"><g transform="translate(0,-.7)"><rect x="-10" y="-7" width="20" height="13" fill="#7088c0" stroke="#44588e"/><path d="M-10 -2.5h20M-10 2h20M-5 -7v13M5 -7v13" stroke="#b8c4e4" stroke-width=".8"/><path d="M-2 -10h4v15l-2 4l-2 -4z" fill="#aaa" stroke="#555" stroke-width=".9"/><path d="M-2 -7h4M-2 -4h4M-2 -1h4M-2 2h4" stroke="#555" stroke-width=".7"/></g></svg><svg style="left:732px;top:84px" width="24" height="24" viewBox="-12 -12 24 24"><g transform="translate(0,-.7)"><path d="M-9 -9h4v12l-2 4l-2 -4z" fill="#aaa" stroke="#555" stroke-width=".9"/><path d="M-9 -6h4M-9 -3h4M-9 0h4" stroke="#555" stroke-width=".7"/><path d="M-2 8l5 -5" stroke="#999" stroke-width="3.4" stroke-linecap="round"/><path d="M7 -2a3.5 3.5 0 1 1 -4 -3l1 2.5h2.5z" fill="#bbb" stroke="#777" stroke-width=".8"/></g></svg><svg style="left:763px;top:84px" width="24" height="24" viewBox="-12 -12 24 24"><g transform="translate(0,-.7)"><path d="M-8 -4h4l1.5 -3h5l1.5 3h4v11h-16z" fill="#f4f4f4" stroke="#777" stroke-width="1.2"/><circle cx="0" cy="1.5" r="4.3" fill="#8090c0" stroke="#555"/><circle cx="-1" cy=".5" r="1.5" fill="#c8d4f0"/></g></svg><svg style="left:794px;top:84px" width="24" height="24" viewBox="-12 -12 24 24"><g transform="translate(0,-.7)"><path d="M-7 -5h10M-7 -3h10M-7 -1h10M-7 1h10M-7 3h10M-6 -6v10M-4 -6v10M-2 -6v10M0 -6v10M2 -6v10" stroke="#6078b8" stroke-width=".9"/><path d="M-7 6a3 3 0 1 1 3 -3l5 5" fill="none" stroke="#aaa" stroke-width="2.6" stroke-linecap="round"/><text x="-10" y="-7" font-family="Liberation Sans,sans-serif" font-weight="bold" font-size="5.5" textLength="14" lengthAdjust="spacingAndGlyphs" fill="#000">R1R2</text><text x="3" y="-1" font-family="Liberation Sans,sans-serif" font-weight="bold" font-size="5.5" fill="#000">V1</text><text x="3" y="7" font-family="Liberation Sans,sans-serif" font-weight="bold" font-size="5.5" fill="#000">V2</text></g></svg><svg style="left:825px;top:84px" width="24" height="24" viewBox="-12 -12 24 24"><g transform="translate(0,-.7)"><path d="M-9 -9h4v12l-2 4l-2 -4z" fill="#aaa" stroke="#555" stroke-width=".9"/><path d="M-9 -6h4M-9 -3h4M-9 0h4" stroke="#555" stroke-width=".7"/><rect x="-3" y="-9" width="11" height="10" fill="#f4f4f4" stroke="#888"/><path d="M-1 -6.5h7M-1 -4h7M-1 -1.5h7" stroke="#777" stroke-width=".8"/></g></svg><svg style="left:856px;top:84px" width="24" height="24" viewBox="-12 -12 24 24"><g transform="translate(0,-.7)"><rect x="-9.5" y="-9.5" width="19" height="19" fill="#7088c0" stroke="#44588e" stroke-width="1.3"/><rect x="-7.5" y="-7.5" width="15" height="15" fill="none" stroke="#a8b8e0" stroke-width="1" stroke-dasharray="1 1"/><g fill="#f8e070"><rect x="-1" y="-6" width="2" height="2"/><rect x="4" y="-3" width="2" height="2"/><rect x="-5" y="-3" width="2" height="2"/><rect x="-1" y="0" width="2" height="2"/><rect x="2" y="0" width="2" height="2"/><rect x="-5" y="4" width="2" height="2"/><rect x="1" y="4" width="2" height="2"/><rect x="4" y="5" width="2" height="2"/></g></g></svg><svg style="left:887px;top:84px" width="24" height="24" viewBox="-12 -12 24 24"><g transform="translate(0,-.7)"><path d="M-10 3h6M2 -2l6 -6" stroke="#e09020" stroke-width="1.4"/><circle cx="-10" cy="3" r="1.6" fill="#fff" stroke="#e09020"/><circle cx="8" cy="-8" r="1.6" fill="#fff" stroke="#e09020"/><circle cx="1" cy="3" r="5.8" fill="#f0a818" stroke="#b07810"/><text x="-3.2" y="5.5" font-family="Liberation Sans,sans-serif" font-weight="bold" font-size="7" fill="#222">TP</text></g></svg><svg style="left:918px;top:84px" width="24" height="24" viewBox="-12 -12 24 24"><g transform="translate(0,-.7)"><g fill="#90a4d8" stroke="#44588e" stroke-width="1"><rect x="-8.5" y="-9.5" width="3.6" height="4.5" rx=".6"/><rect x="-2" y="-9.5" width="3.6" height="4.5" rx=".6"/><rect x="4.5" y="-9.5" width="3.6" height="4.5" rx=".6"/><rect x="-5" y="-2.5" width="3.6" height="4.5" rx=".6"/><rect x="1.5" y="-2.5" width="3.6" height="4.5" rx=".6"/><rect x="-8.5" y="4.5" width="3.6" height="4.5" rx=".6"/><rect x="-2" y="4.5" width="3.6" height="4.5" rx=".6"/><rect x="4.5" y="4.5" width="3.6" height="4.5" rx=".6"/></g></g></svg><svg style="left:963px;top:84px" width="24" height="24" viewBox="-12 -12 24 24"><g transform="translate(0,-.7)"><path d="M-8 5l4.5 -10l6 10l5 -9" fill="none" stroke="#5a74b8" stroke-width="1.4"/><g fill="#8098d0" stroke="#5a74b8" stroke-width=".8"><circle cx="-8" cy="5" r="2"/><circle cx="-3.5" cy="-5" r="2"/><circle cx="2.5" cy="5" r="2"/><circle cx="7.5" cy="-4" r="2"/></g></g></svg><svg style="left:1008px;top:84px" width="24" height="24" viewBox="-12 -12 24 24"><g transform="translate(0,-.7)"><path d="M-9.5 -5.5C-8 -10,-5 -10,-3.5 -7.5S1 -3.5,3 -6.5S7 -10,9.5 -9.5" fill="none" stroke="#c03030" stroke-width="1.3"/><path d="M-5 -5h7l3 3v11h-10z" fill="#f4f4f4" stroke="#777" stroke-width="1.1"/><path d="M-3 0h6M-3 2.5h6M-3 5h6" stroke="#888" stroke-width=".8"/></g></svg><svg style="left:1039px;top:84px" width="24" height="24" viewBox="-12 -12 24 24"><g transform="translate(0,-.7)"><path d="M-9.5 -5.5C-8 -10,-5 -10,-3.5 -7.5S1 -3.5,3 -6.5S7 -10,9.5 -9.5" fill="none" stroke="#c03030" stroke-width="1.3"/><path d="M0 -2c-3 -2,-6 -2,-8 -1v10c2 -1,5 -1,8 1c3 -2,6 -2,8 -1v-10c-2 -1,-5 -1,-8 1z" fill="#f4f8ff" stroke="#44588e" stroke-width="1.2"/><path d="M0 -2v10" stroke="#44588e"/></g></svg><svg style="left:1070px;top:84px" width="24" height="24" viewBox="-12 -12 24 24"><g transform="translate(0,-.7)"><path d="M-9.5 -5.5C-8 -10,-5 -10,-3.5 -7.5S1 -3.5,3 -6.5S7 -10,9.5 -9.5" fill="none" stroke="#c03030" stroke-width="1.3"/><path d="M-7 -3h4l1 1.5h4l1 -1.5h4v12h-14z" fill="#7088c0" stroke="#44588e" stroke-width="1.2"/><path d="M-4 2h8M-4 6h8M0 0v8" stroke="#dfe8f8" stroke-width=".9"/><path d="M-8.5 0v8M8.5 0v8" stroke="#44588e" stroke-width="1" stroke-dasharray="1.5 1.5"/></g></svg><svg style="left:1101px;top:84px" width="24" height="24" viewBox="-12 -12 24 24"><g transform="translate(0,-.7)"><path d="M-9.5 -5.5C-8 -10,-5 -10,-3.5 -7.5S1 -3.5,3 -6.5S7 -10,9.5 -9.5" fill="none" stroke="#c03030" stroke-width="1.3"/><rect x="-6" y="-3" width="12" height="12" rx="1" fill="#fafafa" stroke="#888"/><path d="M-4 -5v3M-1.3 -5v3M1.3 -5v3M4 -5v3" stroke="#e0a010" stroke-width="1.3"/><path d="M-3 3l2 2.5l4 -4.5" fill="none" stroke="#168a28" stroke-width="1.6"/></g></svg><svg style="left:1132px;top:84px" width="24" height="24" viewBox="-12 -12 24 24"><g transform="translate(0,-.7)"><path d="M-9.5 -5.5C-8 -10,-5 -10,-3.5 -7.5S1 -3.5,3 -6.5S7 -10,9.5 -9.5" fill="none" stroke="#c03030" stroke-width="1.3"/><path d="M5 -4l-7 8" stroke="#333" stroke-width="2.6" stroke-linecap="round"/><path d="M-3 5c-4 4,2 6,5 3s5 -1,3 2" fill="none" stroke="#444" stroke-width="1.2"/></g></svg><svg style="left:1177px;top:84px" width="24" height="24" viewBox="-12 -12 24 24"><g transform="translate(0,-.7)"><rect x="-2" y="-10" width="12" height="13" fill="#7088c0" stroke="#44588e"/><rect x="1" y="-7" width="7" height="4" fill="#e8eefa"/><rect x="-7" y="-4" width="12" height="13" fill="#7088c0" stroke="#44588e"/><rect x="-4" y="-1" width="7" height="4" fill="#e8eefa"/><path d="M-9 -2h3M-9 1h3M-9 4h3M-9 7h3" stroke="#e8b020" stroke-width="1.5"/></g></svg><svg style="left:1208px;top:84px" width="24" height="24" viewBox="-12 -12 24 24"><g transform="translate(0,-.7)"><path d="M-9 -7l9 5.5l9 -5.5v11l-9 -5.5l-9 5.5z" fill="#a8c0ec" stroke="#5a78b8" stroke-width="1.1"/><rect x="-5" y="4" width="15" height="4.5" fill="#f4f4f4" stroke="#888"/><rect x="-3" y="5.3" width="8" height="2" fill="#2a9a3a"/></g></svg><svg style="left:1239px;top:84px" width="24" height="24" viewBox="-12 -12 24 24"><g transform="translate(0,-.7)"><rect x="-9" y="-8" width="18" height="16" fill="#e8e8ec" stroke="#777" stroke-width="1.2"/><rect x="-9" y="-8" width="18" height="2.5" fill="#8898c8"/><path d="M-5 -2l5 3l5 -3v6l-5 -3l-5 3z" fill="#a8c0ec" stroke="#5a78b8" stroke-width=".9"/></g></svg><svg style="left:1271px;top:84px" width="24" height="24" viewBox="-12 -12 24 24"><g transform="translate(0,-.7)"><path d="M0 -9.5a8.5 8 0 0 1 4 15c0 2,1 3,3 4c-4 0,-6 -1,-7.5 -3a8.5 8 0 0 1 .5 -16z" fill="#7088c8" stroke="#4a62a8" stroke-width="1.1"/><ellipse cx="-1" cy="-5" rx="5.5" ry="3" fill="#a8b8e4" opacity=".6"/><text x="-4" y="4.5" font-family="Liberation Sans,sans-serif" font-weight="bold" font-size="13" fill="#fff">?</text></g></svg><div class="tbv" style="left:0px;top:114px;width:33px;height:107px;border-radius:0 3px 6px 0"></div><div style="left:5px;top:117px;width:3px;height:3px;background:#3d95ff"></div><div style="left:10px;top:117px;width:3px;height:3px;background:#3d95ff"></div><div style="left:15px;top:117px;width:3px;height:3px;background:#3d95ff"></div><div style="left:20px;top:117px;width:3px;height:3px;background:#3d95ff"></div><div style="left:25px;top:117px;width:3px;height:3px;background:#3d95ff"></div><div class="tbv" style="left:0px;top:222px;width:33px;height:260px;border-radius:0 3px 6px 0"></div><div style="left:5px;top:224px;width:3px;height:3px;background:#3d95ff"></div><div style="left:10px;top:224px;width:3px;height:3px;background:#3d95ff"></div><div style="left:15px;top:224px;width:3px;height:3px;background:#3d95ff"></div><div style="left:20px;top:224px;width:3px;height:3px;background:#3d95ff"></div><div style="left:25px;top:224px;width:3px;height:3px;background:#3d95ff"></div><div class="tbv" style="left:0px;top:483px;width:33px;height:138px;border-radius:0 3px 6px 0"></div><div style="left:5px;top:486px;width:3px;height:3px;background:#3d95ff"></div><div style="left:10px;top:486px;width:3px;height:3px;background:#3d95ff"></div><div style="left:15px;top:486px;width:3px;height:3px;background:#3d95ff"></div><div style="left:20px;top:486px;width:3px;height:3px;background:#3d95ff"></div><div style="left:25px;top:486px;width:3px;height:3px;background:#3d95ff"></div><div style="left:35px;top:117px;width:48px;height:385px;background:linear-gradient(90deg,#e0e0e0,#ececec 20%,#e4e4e4 55%,#cfcfcf);border-radius:3px"></div><div style="left:43px;top:125px;width:32px;height:377px;background:linear-gradient(90deg,#ebebeb,#e2e2e2 60%,#d4d4d4)"></div><div style="left:40px;top:120px;width:3px;height:3px;background:#3d95ff"></div><div style="left:45px;top:120px;width:3px;height:3px;background:#3d95ff"></div><div style="left:50px;top:120px;width:3px;height:3px;background:#3d95ff"></div><div style="left:55px;top:120px;width:3px;height:3px;background:#3d95ff"></div><div style="left:60px;top:120px;width:3px;height:3px;background:#3d95ff"></div><div style="left:65px;top:120px;width:3px;height:3px;background:#3d95ff"></div><div style="left:70px;top:120px;width:3px;height:3px;background:#3d95ff"></div><div style="left:75px;top:120px;width:3px;height:3px;background:#3d95ff"></div><svg style="left:4px;top:127px" width="24" height="24" viewBox="-12 -12 24 24"><rect x="-9" y="-2" width="14" height="12" rx="1" fill="#2fa840" stroke="#18702a"/><path d="M-7 1h5v3h6M-7 4h3M-7 7h9M-1 1h4" stroke="#0c5a1c" stroke-width="1" fill="none"/><rect x="1" y="-10" width="8" height="8" rx="1" fill="#c8ccd8" stroke="#667"/><path d="M0 -8h1M0 -5h1M9 -8h1M9 -5h1" stroke="#333" stroke-width="1"/><path d="M-1 -8c-3 -2,-6 -1,-7 2" fill="none" stroke="#c03030" stroke-width="1.5"/><path d="M-10 -8l1 4l3 -2z" fill="#c03030"/></svg><svg style="left:4px;top:156px" width="24" height="24" viewBox="-12 -12 24 24"><rect x="-7.5" y="-7.5" width="15" height="15" fill="none" stroke="#44588e" stroke-width="1.6" stroke-dasharray="1.2 1.2"/><rect x="-6" y="-6" width="12" height="12" fill="#eee"/><text x="-5" y="3.5" font-family="Liberation Sans,sans-serif" font-weight="bold" font-size="8.5" fill="#c02828">U1</text></svg><svg style="left:4px;top:186px" width="24" height="24" viewBox="-12 -12 24 24"><path d="M0 -4h5a4 4 0 0 1 0 8h-5z" fill="#999" stroke="#444" stroke-width="1.2"/><rect x="-6" y="-4" width="4" height="3" fill="#f8e020" stroke="#a08810" stroke-width=".7"/><rect x="-6" y="1" width="4" height="3" fill="#f8e020" stroke="#a08810" stroke-width=".7"/><path d="M-2 -2.5h2M-2 2.5h2" stroke="#444"/><path d="M-8 -4c-2 2,-2 6,0 8" fill="none" stroke="#c03030" stroke-width="1.3"/><path d="M-10 -4h3v2zM-10 4h3v-2z" fill="#c03030"/></svg><svg style="left:4px;top:231px" width="24" height="24" viewBox="-12 -12 24 24"><path d="M-7 6h6v-9" fill="none" stroke="#222" stroke-width="1.5"/><path d="M1 -5l4 -1" stroke="#222" stroke-width="1.4" stroke-dasharray="1.5 1.5"/><rect x="-10" y="4" width="4.5" height="4.5" fill="#f8e020" stroke="#a08810" stroke-width=".7"/><rect x="5" y="-9" width="4.5" height="4.5" fill="#f8e020" stroke="#a08810" stroke-width=".7"/></svg><svg style="left:4px;top:261px" width="24" height="24" viewBox="-12 -12 24 24"><g transform="translate(0,1)"><path d="M-9.5 -8.5h3v13h15v6h-3v-3h-15z" fill="#a8bcec" stroke="#44588e" stroke-width="1.1"/><rect x="-4" y="-6" width="12" height="6" fill="none" stroke="#5a78b8" stroke-width="1" stroke-dasharray="1.5 1.2"/><path d="M0 -8v5" stroke="#c03030" stroke-width="1.3"/><path d="M-2.5 -4h5l-2.5 3.5z" fill="#c03030"/></g></svg><svg style="left:4px;top:292px" width="24" height="24" viewBox="-12 -12 24 24"><path d="M-9 4h4v-10h5v13h5v-6h4" fill="none" stroke="#333" stroke-width="1.4"/><path d="M-2.5 2v-6M2.5 -3v7" stroke="#c03030" stroke-width="1.2"/><path d="M-4.5 -2l2 -3l2 3zM.5 3l2 3l2 -3z" fill="#c03030"/></svg><svg style="left:4px;top:324px" width="24" height="24" viewBox="-12 -12 24 24"><path d="M-7 -6c0 6,4 6,2 14" fill="none" stroke="#556" stroke-width="1.3"/><path d="M7 -6v14" stroke="#222" stroke-width="1.4"/><path d="M-3 3h6" stroke="#c03030" stroke-width="1.3"/><path d="M2 .5l3.5 2.5l-3.5 2.5z" fill="#c03030"/><rect x="-9.5" y="-10" width="4.5" height="4.5" fill="#f8e020" stroke="#a08810" stroke-width=".7"/><rect x="5" y="-10" width="4.5" height="4.5" fill="#f8e020" stroke="#a08810" stroke-width=".7"/></svg><svg style="left:4px;top:355px" width="24" height="24" viewBox="-12 -12 24 24"><path d="M-8 -9l13 9l-13 9" fill="none" stroke="#44588e" stroke-width="5.6" stroke-linejoin="round" stroke-linecap="round"/><path d="M-8 -9l13 9l-13 9" fill="none" stroke="#a8bcf0" stroke-width="3.4" stroke-linejoin="round" stroke-linecap="round"/><path d="M-7 -5l5 4M-7 5l5 -4" stroke="#44588e" stroke-width="1" stroke-dasharray="2 1.5"/><ellipse cx="-3" cy="0" rx="2" ry="1.3" fill="#c03030"/><ellipse cx="5.5" cy="0" rx="2" ry="1.3" fill="#c03030"/></svg><svg style="left:4px;top:387px" width="24" height="24" viewBox="-12 -12 24 24"><path d="M-8 -7h13M-8 -3h13M-8 1h13M-8 5h13" stroke="#d05838" stroke-width="2.2"/><path d="M4 -9l4 2l-4 2zM4 -5l4 2l-4 2zM4 -1l4 2l-4 2zM4 3l4 2l-4 2z" fill="#c04020"/></svg><svg style="left:4px;top:418px" width="24" height="24" viewBox="-12 -12 24 24"><rect x="-9.5" y="-9.5" width="19" height="19" fill="#7088c8" stroke="#44588e" stroke-width="1.3"/><g fill="#e8ecf8"><rect x="-7" y="-7" width="5" height="5"/><rect x="2" y="-7" width="5" height="5"/><rect x="-7" y="2" width="5" height="5"/><rect x="2" y="2" width="5" height="5"/></g><path d="M-5 -5l10 10M5 -5l-10 10" stroke="#c83048" stroke-width="1.3"/><path d="M-6.5 -6.5h3.5l-3.5 3.5zM6.5 -6.5h-3.5l3.5 3.5zM-6.5 6.5h3.5l-3.5 -3.5zM6.5 6.5h-3.5l3.5 -3.5z" fill="#c83048"/></svg><svg style="left:4px;top:449px" width="24" height="24" viewBox="-12 -12 24 24"><path d="M-8 -1v-2a3 3 0 0 1 6 0v6a3 3 0 0 0 6 0v-4h3v5" fill="none" stroke="#3a4a70" stroke-width="3.6"/><path d="M-8 -1v-2a3 3 0 0 1 6 0v6a3 3 0 0 0 6 0v-4h3v5" fill="none" stroke="#b8c4e4" stroke-width="1.2"/><circle cx="-8" cy="0" r="1.6" fill="#3a4a70"/><circle cx="7" cy="5" r="1.6" fill="#3a4a70"/></svg><svg style="left:4px;top:494px" width="24" height="24" viewBox="-12 -12 24 24"><path d="M-9 -9l18 17" stroke="#3a4a80" stroke-width="1.7"/></svg><svg style="left:4px;top:525px" width="24" height="24" viewBox="-12 -12 24 24"><rect x="-8" y="-6.5" width="16" height="13" fill="#7f93c8" stroke="#4a5f9a" stroke-width="1.2"/><path d="M-7 5.5v-11h14" fill="none" stroke="#c4d0ee" stroke-width="1"/></svg><svg style="left:4px;top:556px" width="24" height="24" viewBox="-12 -12 24 24"><text x="-10" y="1" font-family="Liberation Sans,sans-serif" font-size="11" fill="#666">abc</text><circle cx="4" cy="5" r="4" fill="#1aa82a" stroke="#0c6a18" stroke-width=".8"/><path d="M1.5 5h5M4 2.5v5" stroke="#fff" stroke-width="1.4"/></svg><svg style="left:4px;top:587px" width="24" height="24" viewBox="-12 -12 24 24"><text x="-10" y="1" font-family="Liberation Sans,sans-serif" font-size="11" fill="#666">abc</text><path d="M-2 9l1.5 -4l8 -8l2.5 2.5l-8 8z" fill="#f8b030" stroke="#a86810" stroke-width=".8"/><path d="M-2 9l1.5 -4l2.5 2.5z" fill="#f8e0b0" stroke="#a86810" stroke-width=".6"/><path d="M6 -1.5l2.5 2.5" stroke="#c03030" stroke-width="1.6"/></svg><svg style="left:46px;top:125px" width="24" height="24" viewBox="-12 -12 24 24"><path d="M-9 -9 L-2 -3 M-9 -5.5 L-2 -3 M-9 -2 L-2 -3 M9 2 L2 3.5 M9 5.5 L2 3.5 M9 9 L2 3.5" stroke="#5a6ea8" stroke-width="1.2" fill="none"/><path d="M-3 -4 L4 4" stroke="#2fa23a" stroke-width="3"/><circle cx="-9" cy="-9" r="1.15" fill="#4e4" stroke="#171" stroke-width=".7"/><circle cx="-9" cy="-5.5" r="1.15" fill="#4e4" stroke="#171" stroke-width=".7"/><circle cx="-9" cy="-2" r="1.15" fill="#4e4" stroke="#171" stroke-width=".7"/><circle cx="9" cy="2" r="1.15" fill="#4e4" stroke="#171" stroke-width=".7"/><circle cx="9" cy="5.5" r="1.15" fill="#4e4" stroke="#171" stroke-width=".7"/><circle cx="9" cy="9" r="1.15" fill="#4e4" stroke="#171" stroke-width=".7"/><ellipse cx="5" cy="-6" rx="5" ry="1.3" fill="#444"/><path d="M2 -6v-3h6v3z" fill="#c04848" stroke="#803030" stroke-width=".6"/></svg><svg style="left:46px;top:156px" width="24" height="24" viewBox="-12 -12 24 24"><path d="M-9 -9 L-2 -3 M-9 -5.5 L-2 -3 M-9 -2 L-2 -3 M9 2 L2 3.5 M9 5.5 L2 3.5 M9 9 L2 3.5" stroke="#5a6ea8" stroke-width="1.2" fill="none"/><path d="M-3 -4 L4 4" stroke="#2fa23a" stroke-width="3"/><circle cx="-9" cy="-9" r="1.15" fill="#4e4" stroke="#171" stroke-width=".7"/><circle cx="-9" cy="-5.5" r="1.15" fill="#4e4" stroke="#171" stroke-width=".7"/><circle cx="-9" cy="-2" r="1.15" fill="#4e4" stroke="#171" stroke-width=".7"/><circle cx="9" cy="2" r="1.15" fill="#4e4" stroke="#171" stroke-width=".7"/><circle cx="9" cy="5.5" r="1.15" fill="#4e4" stroke="#171" stroke-width=".7"/><circle cx="9" cy="9" r="1.15" fill="#4e4" stroke="#171" stroke-width=".7"/></svg><svg style="left:46px;top:187px" width="24" height="24" viewBox="-12 -12 24 24"><path d="M-9 -9 L-2 -3 M-9 -5.5 L-2 -3 M-9 -2 L-2 -3 M9 2 L2 3.5 M9 5.5 L2 3.5 M9 9 L2 3.5" stroke="#5a6ea8" stroke-width="1.2" fill="none"/><path d="M-3 -4 L4 4" stroke="#2fa23a" stroke-width="3"/><circle cx="-9" cy="-9" r="1.15" fill="#4e4" stroke="#171" stroke-width=".7"/><circle cx="-9" cy="-5.5" r="1.15" fill="#4e4" stroke="#171" stroke-width=".7"/><circle cx="-9" cy="-2" r="1.15" fill="#4e4" stroke="#171" stroke-width=".7"/><circle cx="9" cy="2" r="1.15" fill="#4e4" stroke="#171" stroke-width=".7"/><circle cx="9" cy="5.5" r="1.15" fill="#4e4" stroke="#171" stroke-width=".7"/><circle cx="9" cy="9" r="1.15" fill="#4e4" stroke="#171" stroke-width=".7"/><path d="M3 -9l5 5M8 -9l-5 5" stroke="#c84040" stroke-width="1.8"/></svg><svg style="left:46px;top:219px" width="24" height="24" viewBox="-12 -12 24 24"><path d="M-3 -8h7l3 3v12h-10z" fill="#f4f4f4" stroke="#888"/><path d="M-9 -9 L-2 -3 M-9 -5.5 L-2 -3 M-9 -2 L-2 -3 M9 2 L2 3.5 M9 5.5 L2 3.5 M9 9 L2 3.5" stroke="#5a6ea8" stroke-width="1.2" fill="none"/><path d="M-3 -4 L4 4" stroke="#2fa23a" stroke-width="3"/><circle cx="-9" cy="-9" r="1.15" fill="#4e4" stroke="#171" stroke-width=".7"/><circle cx="-9" cy="-5.5" r="1.15" fill="#4e4" stroke="#171" stroke-width=".7"/><circle cx="-9" cy="-2" r="1.15" fill="#4e4" stroke="#171" stroke-width=".7"/><circle cx="9" cy="2" r="1.15" fill="#4e4" stroke="#171" stroke-width=".7"/><circle cx="9" cy="5.5" r="1.15" fill="#4e4" stroke="#171" stroke-width=".7"/><circle cx="9" cy="9" r="1.15" fill="#4e4" stroke="#171" stroke-width=".7"/><path d="M-9 3l9 5l-1.5 2l-9 -5z" fill="#f8a830" stroke="#a86810" stroke-width=".7"/><path d="M0 8l2.5 2.5l-4 -.5z" fill="#fce"/><path d="M-9 3l-1.5 2" stroke="#c03030" stroke-width="2"/></svg><svg style="left:46px;top:251px" width="24" height="24" viewBox="-12 -12 24 24"><rect x="-6" y="-6" width="12" height="12" fill="#70e070"/><path d="M-9 -9h18M-9 9h18" stroke="#2a9a35" stroke-width="1.6"/><path d="M-9 -9v18M9 -9v18" stroke="#2a9a35" stroke-width="1" stroke-dasharray="1.5 1.5"/><path d="M0 -6v12" stroke="#5a74b8" stroke-width="2.4"/><path d="M-4 -2l4 -5l4 5zM-4 2l4 5l4 -5z" fill="#8098d8" stroke="#44588e" stroke-width=".7"/><circle cx="-9" cy="-9" r="1.15" fill="#4e4" stroke="#171" stroke-width=".7"/><circle cx="-9" cy="-5" r="1.15" fill="#4e4" stroke="#171" stroke-width=".7"/><circle cx="-9" cy="5" r="1.15" fill="#4e4" stroke="#171" stroke-width=".7"/><circle cx="-9" cy="9" r="1.15" fill="#4e4" stroke="#171" stroke-width=".7"/><circle cx="9" cy="-9" r="1.15" fill="#4e4" stroke="#171" stroke-width=".7"/><circle cx="9" cy="-5" r="1.15" fill="#4e4" stroke="#171" stroke-width=".7"/><circle cx="9" cy="5" r="1.15" fill="#4e4" stroke="#171" stroke-width=".7"/><circle cx="9" cy="9" r="1.15" fill="#4e4" stroke="#171" stroke-width=".7"/></svg><svg style="left:46px;top:282px" width="24" height="24" viewBox="-12 -12 24 24"><path d="M-5 -8h8l3 3v13h-11z" fill="#f4f4f4" stroke="#777"/><path d="M-3 2v5" stroke="#2a9a35" stroke-width="1" stroke-dasharray="1 1"/><path d="M-9 -9 L-2 -3 M-9 -5.5 L-2 -3 M-9 -2 L-2 -3 M9 2 L2 3.5 M9 5.5 L2 3.5 M9 9 L2 3.5" stroke="#5a6ea8" stroke-width="1.2" fill="none"/><path d="M-3 -4 L4 4" stroke="#2fa23a" stroke-width="3"/><circle cx="-9" cy="-9" r="1.15" fill="#4e4" stroke="#171" stroke-width=".7"/><circle cx="-9" cy="-5.5" r="1.15" fill="#4e4" stroke="#171" stroke-width=".7"/><circle cx="-9" cy="-2" r="1.15" fill="#4e4" stroke="#171" stroke-width=".7"/><circle cx="9" cy="2" r="1.15" fill="#4e4" stroke="#171" stroke-width=".7"/><circle cx="9" cy="5.5" r="1.15" fill="#4e4" stroke="#171" stroke-width=".7"/><circle cx="9" cy="9" r="1.15" fill="#4e4" stroke="#171" stroke-width=".7"/></svg><svg style="left:46px;top:313px" width="24" height="24" viewBox="-12 -12 24 24"><rect x="-1" y="-2" width="8" height="7" rx="1.5" fill="#aaa"/><path d="M-9 -9 L-2 -3 M-9 -5.5 L-2 -3 M-9 -2 L-2 -3 M9 2 L2 3.5 M9 5.5 L2 3.5 M9 9 L2 3.5" stroke="#5a6ea8" stroke-width="1.2" fill="none"/><path d="M-3 -4 L4 4" stroke="#2fa23a" stroke-width="3"/><circle cx="-9" cy="-9" r="1.15" fill="#4e4" stroke="#171" stroke-width=".7"/><circle cx="-9" cy="-5.5" r="1.15" fill="#4e4" stroke="#171" stroke-width=".7"/><circle cx="-9" cy="-2" r="1.15" fill="#4e4" stroke="#171" stroke-width=".7"/><circle cx="9" cy="2" r="1.15" fill="#4e4" stroke="#171" stroke-width=".7"/><circle cx="9" cy="5.5" r="1.15" fill="#4e4" stroke="#171" stroke-width=".7"/><circle cx="9" cy="9" r="1.15" fill="#4e4" stroke="#171" stroke-width=".7"/></svg><svg style="left:46px;top:375px" width="24" height="24" viewBox="-12 -12 24 24"><path d="M-9 -8h5M-9 -5h5M-9 -2h5M4 3h5M4 6h5M4 9h5" stroke="#2a9a35" stroke-width="1.1"/><circle cx="-9" cy="-8" r="1.1" fill="#4e4" stroke="#171" stroke-width=".7"/><circle cx="-9" cy="-5" r="1.1" fill="#4e4" stroke="#171" stroke-width=".7"/><circle cx="-9" cy="-2" r="1.1" fill="#4e4" stroke="#171" stroke-width=".7"/><circle cx="9" cy="3" r="1.1" fill="#4e4" stroke="#171" stroke-width=".7"/><circle cx="9" cy="6" r="1.1" fill="#4e4" stroke="#171" stroke-width=".7"/><circle cx="9" cy="9" r="1.1" fill="#4e4" stroke="#171" stroke-width=".7"/><rect x="-4" y="-8" width="8" height="15" fill="#ddd" stroke="#666" stroke-width="1"/><g><rect x="-3" y="-6.5" width="2" height="1.8" fill="#555"/><rect x="0" y="-6.5" width="2" height="1.8" fill="#555"/><rect x="-3" y="-3.5" width="2" height="1.8" fill="#e03030"/><rect x="0" y="-3.5" width="2" height="1.8" fill="#f0c020"/><rect x="-3" y="-.5" width="2" height="1.8" fill="#30b040"/><rect x="0" y="-.5" width="2" height="1.8" fill="#555"/><rect x="-3" y="2.5" width="5" height="1.8" fill="#888"/></g></svg><svg style="left:46px;top:406px" width="24" height="24" viewBox="-12 -12 24 24"><path d="M-9 -8h5M-9 -5h5M-9 -2h5M4 3h5M4 6h5M4 9h5" stroke="#2a9a35" stroke-width="1.1"/><circle cx="-9" cy="-8" r="1.1" fill="#4e4" stroke="#171" stroke-width=".7"/><circle cx="-9" cy="-5" r="1.1" fill="#4e4" stroke="#171" stroke-width=".7"/><circle cx="-9" cy="-2" r="1.1" fill="#4e4" stroke="#171" stroke-width=".7"/><circle cx="9" cy="3" r="1.1" fill="#4e4" stroke="#171" stroke-width=".7"/><circle cx="9" cy="6" r="1.1" fill="#4e4" stroke="#171" stroke-width=".7"/><circle cx="9" cy="9" r="1.1" fill="#4e4" stroke="#171" stroke-width=".7"/><rect x="-4" y="-8" width="8" height="15" fill="#ddd" stroke="#666" stroke-width="1"/><circle cx="0" cy="-5" r="1.5" fill="#c03030"/><circle cx="0" cy="-1" r="1.5" fill="#f0c020"/><circle cx="0" cy="3" r="1.5" fill="#20d030"/></svg><svg style="left:46px;top:437px" width="24" height="24" viewBox="-12 -12 24 24"><path d="M-9 -8l6 5M-9 -5l6 2M-9 -2l6 -1M9 3l-6 -1M9 6l-6 -4M9 9l-6 -7" stroke="#5a74b8" stroke-width="1.1"/><circle cx="-9" cy="-8" r="1.1" fill="#4e4" stroke="#171" stroke-width=".7"/><circle cx="-9" cy="-5" r="1.1" fill="#4e4" stroke="#171" stroke-width=".7"/><circle cx="-9" cy="-2" r="1.1" fill="#4e4" stroke="#171" stroke-width=".7"/><circle cx="9" cy="3" r="1.1" fill="#4e4" stroke="#171" stroke-width=".7"/><circle cx="9" cy="6" r="1.1" fill="#4e4" stroke="#171" stroke-width=".7"/><circle cx="9" cy="9" r="1.1" fill="#4e4" stroke="#171" stroke-width=".7"/><rect x="-4" y="-8" width="8" height="15" fill="#ddd" stroke="#666"/><rect x="-2.5" y="-4" width="5" height="7" rx="1" fill="#5a74c0"/><circle cx="0" cy="-1" r="1.3" fill="#fff"/></svg><svg style="left:46px;top:468px" width="24" height="24" viewBox="-12 -12 24 24"><path d="M-9 -8h5M-9 -5h5M-9 -2h5M4 3h5M4 6h5M4 9h5" stroke="#2a9a35" stroke-width="1.1"/><circle cx="-9" cy="-8" r="1.1" fill="#4e4" stroke="#171" stroke-width=".7"/><circle cx="-9" cy="-5" r="1.1" fill="#4e4" stroke="#171" stroke-width=".7"/><circle cx="-9" cy="-2" r="1.1" fill="#4e4" stroke="#171" stroke-width=".7"/><circle cx="9" cy="3" r="1.1" fill="#4e4" stroke="#171" stroke-width=".7"/><circle cx="9" cy="6" r="1.1" fill="#4e4" stroke="#171" stroke-width=".7"/><circle cx="9" cy="9" r="1.1" fill="#4e4" stroke="#171" stroke-width=".7"/><rect x="-4" y="-8" width="8" height="15" fill="#ddd" stroke="#666" stroke-width="1"/><rect x="-2.5" y="-4" width="5" height="7" rx="1" fill="#5a74c0"/><circle cx="0" cy="-1" r="1.3" fill="#fff"/></svg><div style="left:37px;top:342px;width:44px;height:30px;background:#e9e9e9"></div><svg style="left:38px;top:344px" width="24" height="24" viewBox="-12 -12 24 24"><path d="M-10 -6c4 0,4 4,9 4s5 -4,9 -4" fill="none" stroke="#e8a020" stroke-width="2"/><path d="M-10 5c3 -2,5 2,9 0s6 -2,9 0M-10 8c3 -2,5 2,9 0s6 -2,9 0" fill="none" stroke="#1a7a2a" stroke-width="1.6"/><path d="M-2.5 -3v3h-2.500l4.5 4l4.5 -4h-2.500v-3z" fill="#7088c8" stroke="#44588e" stroke-width=".8"/><path d="M-11 -8v4M-11 3v6M9 -8v4M9 3v6" stroke="#333" stroke-width="1" stroke-dasharray="1 1"/></svg><svg style="left:61px;top:345px" width="24" height="24" viewBox="-12 -12 24 24"><path d="M0 -8v11M-3 0l3 4l3 -4M-4 7h8" fill="none" stroke="#44588e" stroke-width="1.1"/></svg><div style="left:84px;top:114px;width:1239px;height:1px;background:#fff"></div><div style="left:84px;top:115px;width:1239px;height:628px;border-style:solid;border-width:2px;border-color:#a8a8a8 #fff #fff #b0b0b0;background:#000"></div><div style="left:85px;top:116px;width:1237px;height:626px;border-style:solid;border-width:1px;border-color:#606060 #e3e3e3 #e3e3e3 #606060"></div><svg style="left:86px;top:116px" width="1235" height="625" viewBox="86 116 1235 625" shape-rendering="crispEdges"><defs><filter id="thin" x="-10%" y="-10%" width="120%" height="120%"><feMorphology operator="erode" radius="1.1"/></filter><filter id="thin1" x="-10%" y="-10%" width="120%" height="120%"><feMorphology operator="erode" radius="1 1"/></filter></defs><g fill="none" stroke="#6a8e3a" stroke-width="1"><path d="M369.5 117V741M86 423.500H369.5"/><circle cx="704" cy="428" r="118.5"/><circle cx="704" cy="195" r="70.5"/><circle cx="502.5" cy="544" r="71"/><circle cx="905.5" cy="544" r="71"/><circle cx="576" cy="294.5" r="4.5"/><circle cx="516.5" cy="398.5" r="4.5"/><circle cx="887.5" cy="397.5" r="4.5"/><circle cx="613.5" cy="609.5" r="4.5"/><circle cx="801.5" cy="609.5" r="4.5"/><rect x="796.5" y="251.5" width="29" height="29"/></g><circle cx="704" cy="428" r="307.5" fill="none" stroke="#c4c4c4" stroke-width="1"/><g font-family="Liberation Sans,sans-serif" fill="#ababab" text-anchor="middle" shape-rendering="auto"><text x="704" y="199" font-size="13.5">N00121</text><text x="502.5" y="548" font-size="13.5">N00121</text><text x="905.5" y="548" font-size="13.5">N00121</text><text x="704" y="436" font-size="23.4">N00106</text></g><g font-family="DejaVu Sans Light,DejaVu Sans,sans-serif" font-weight="200" fill="#6a8e3a" shape-rendering="auto"><g filter="url(#thin1)"><text transform="translate(118.3,283.5) scale(.545,1)" font-size="106">1</text></g><g filter="url(#thin)"><text transform="translate(109.6,641.5) scale(.975,1)" font-size="101">3</text></g></g></svg><div style="left:1328px;top:114px;width:1px;height:358px;background:#8c8c8c"></div><div style="left:1329px;top:114px;width:1px;height:358px;background:#fff"></div><div style="left:1328px;top:478px;width:1px;height:364px;background:#8c8c8c"></div><div style="left:1328px;top:478px;width:240px;height:1px;background:#8c8c8c"></div><div class="cap" style="left:1330px;top:115px;width:237px;height:17px;border:1px solid #c8c8c8;border-bottom-color:#999"></div><div style="left:1332px;top:117px;width:3px;height:3px;background:#3d95ff"></div><div style="left:1332px;top:122px;width:3px;height:3px;background:#3d95ff"></div><div class="t" style="left:1340px;top:114px;width:80px;height:14px;font-size:11px;letter-spacing:-.15px;line-height:14px">Options</div><svg style="left:1523px;top:116px" width="44" height="12" viewBox="0 0 44 12"><path d="M3.5 2v5M6.5 2v5M3 2h4M1.5 7.500h7M5 8v3.5" stroke="#000" stroke-width="1" fill="none"/><path d="M18 8l3.5 -4l3.5 4z" fill="#000"/><path d="M31 3l6 6M37 3l-6 6" stroke="#000" stroke-width="1.8"/></svg><div style="left:1330px;top:133px;width:237px;height:339px;border:1px solid #828282;border-bottom:none;background:#f0f0f0"></div><div style="left:1331px;top:134px;width:235px;height:338px;border:1px solid #fff;border-bottom:none"></div><div style="left:1551px;top:135px;width:15px;height:337px;background:#f4f4f4"></div><svg style="left:1554px;top:140px" width="10" height="6" viewBox="0 0 10 6"><path d="M1 5l4 -4l4 4z" fill="#666"/></svg><svg style="left:1554px;top:461px" width="10" height="6" viewBox="0 0 10 6"><path d="M1 1l4 4l4 -4z" fill="#666"/></svg><div style="left:1552px;top:152px;width:14px;height:161px;border:1px solid #9a9a9a;border-radius:2px;background:linear-gradient(90deg,#f4f4f4,#dedede 45%,#c8c8c8)"></div><div style="left:1555px;top:227px;width:8px;height:1px;background:#666"></div><div style="left:1555px;top:229px;width:8px;height:1px;background:#666"></div><div style="left:1555px;top:231px;width:8px;height:1px;background:#666"></div><div style="left:1555px;top:233px;width:8px;height:1px;background:#666"></div><div class="t" style="left:1338px;top:151px;width:180px;height:14px;font-size:11px;letter-spacing:-.15px;line-height:14px">Active Class and Subclass:</div><div style="left:1366px;top:169px;width:150px;height:21px;border:1px solid #707070;border-radius:3px;background:linear-gradient(#f4f4f4,#ececec 48%,#dcdcdc 52%,#d0d0d0);box-shadow:inset 0 0 0 1px #fafafa"></div><div class="t" style="left:1370px;top:172px;width:120px;height:15px;font-size:11px;letter-spacing:-.15px;line-height:15px">Package Geometry</div><svg style="left:1502px;top:177px" width="9" height="5" viewBox="0 0 9 5"><path d="M0 0h8l-4 4.500z" fill="#000"/></svg><div style="left:1366px;top:202px;width:150px;height:24px;border:1px solid #dce4f0;border-radius:2px;background:#fff"></div><div style="left:1371px;top:207px;width:12px;height:14px;border:1px solid #000;background:#7fffd4"></div><div class="t" style="left:1387px;top:205px;width:100px;height:15px;font-size:11px;letter-spacing:-.15px;line-height:15px">Assembly_Top</div><svg style="left:1502px;top:212px" width="9" height="5" viewBox="0 0 9 5"><path d="M0 0h8l-4 4.500z" fill="#000"/></svg><div style="left:1345px;top:204px;width:13px;height:13px;background:#000;border:1px solid #6a6a6a;box-shadow:inset 0 0 0 1px #b4b4b4"></div><div class="cb" style="left:1338px;top:271px;width:13px;height:13px;"></div><div class="t" style="left:1354px;top:271px;width:60px;height:14px;font-size:11px;letter-spacing:-.15px;line-height:14px">Mirror</div><div class="t" style="left:1444px;top:269px;width:85px;height:20px;border:1px solid #707070;border-radius:3px;background:linear-gradient(#f6f6f6,#ededed 48%,#dedede 52%,#d2d2d2);box-shadow:inset 0 0 0 1px #fafafa;font-size:11px;letter-spacing:-.15px;line-height:18px;text-align:center">More options...</div><div style="left:1578px;top:137px;width:20px;height:40px;border:1px solid #8aa0c8;border-right:none;background:#f2f2f4"></div><div class="t" style="left:1567px;top:147px;width:40px;height:14px;font-size:13px;line-height:14px;text-align:center;transform:rotate(90deg);color:#111">Find</div><div class="cap" style="left:1330px;top:479px;width:238px;height:17px;border:1px solid #c8c8c8;border-bottom-color:#999"></div><div style="left:1332px;top:482px;width:3px;height:3px;background:#3d95ff"></div><div style="left:1332px;top:487px;width:3px;height:3px;background:#3d95ff"></div><div class="t" style="left:1340px;top:479px;width:80px;height:14px;font-size:11px;letter-spacing:-.15px;line-height:14px">Visibility</div><svg style="left:1523px;top:480px" width="44" height="12" viewBox="0 0 44 12"><path d="M3.5 2v5M6.5 2v5M3 2h4M1.5 7.500h7M5 8v3.5" stroke="#000" stroke-width="1" fill="none"/><path d="M18 8l3.5 -4l3.5 4z" fill="#000"/><path d="M31 3l6 6M37 3l-6 6" stroke="#000" stroke-width="1.8"/></svg><div class="t" style="left:1330px;top:514px;width:40px;height:14px;font-size:11px;letter-spacing:-.15px;line-height:14px">Views:</div><div style="left:1372px;top:510px;width:158px;height:21px;border:1px solid #707070;border-radius:3px;background:linear-gradient(#f4f4f4,#ececec 48%,#dcdcdc 52%,#d0d0d0);box-shadow:inset 0 0 0 1px #fafafa"></div><svg style="left:1516px;top:518px" width="9" height="5" viewBox="0 0 9 5"><path d="M0 0h8l-4 4.500z" fill="#000"/></svg><div class="t" style="left:1330px;top:536px;width:40px;height:14px;font-size:11px;letter-spacing:-.15px;line-height:14px;text-decoration:underline">Layer</div><div class="t" style="left:1393px;top:536px;width:40px;height:14px;font-size:11px;letter-spacing:-.15px;line-height:14px;text-decoration:underline">Plan</div><div class="t" style="left:1421px;top:536px;width:40px;height:14px;font-size:11px;letter-spacing:-.15px;line-height:14px;text-decoration:underline">Etch</div><div class="t" style="left:1449px;top:536px;width:40px;height:14px;font-size:11px;letter-spacing:-.15px;line-height:14px;text-decoration:underline">Via</div><div class="t" style="left:1470px;top:536px;width:40px;height:14px;font-size:11px;letter-spacing:-.15px;line-height:14px;text-decoration:underline">Pin</div><div class="t" style="left:1491px;top:536px;width:40px;height:14px;font-size:11px;letter-spacing:-.15px;line-height:14px;text-decoration:underline">Drc</div><div class="t" style="left:1511px;top:536px;width:40px;height:14px;font-size:11px;letter-spacing:-.15px;line-height:14px;text-decoration:underline">All</div><div class="t" style="left:1330px;top:558px;width:70px;height:14px;font-size:11px;letter-spacing:-.15px;line-height:14px">Conductors</div><div class="t" style="left:1330px;top:580px;width:70px;height:14px;font-size:11px;letter-spacing:-.15px;line-height:14px">Planes</div><div class="cb" style="left:1407px;top:557px;width:13px;height:13px;"></div><div class="cb" style="left:1428px;top:557px;width:13px;height:13px;"></div><div class="cb" style="left:1449px;top:557px;width:13px;height:13px;"></div><div class="cb" style="left:1470px;top:557px;width:13px;height:13px;"></div><div class="cb" style="left:1491px;top:557px;width:13px;height:13px;"></div><div class="cb" style="left:1512px;top:557px;width:13px;height:13px;"></div><div class="cb" style="left:1379px;top:579px;width:13px;height:13px;"><svg style="left:1px;top:1px" width="9" height="9" viewBox="0 0 9 9"><path d="M1.5 4l2 3.500l4 -7" fill="none" stroke="#4a5f97" stroke-width="1.6"/></svg></div><div class="cb" style="left:1428px;top:579px;width:13px;height:13px;"><svg style="left:1px;top:1px" width="9" height="9" viewBox="0 0 9 9"><path d="M1.5 4l2 3.500l4 -7" fill="none" stroke="#4a5f97" stroke-width="1.6"/></svg></div><div class="cb" style="left:1449px;top:579px;width:13px;height:13px;"><svg style="left:1px;top:1px" width="9" height="9" viewBox="0 0 9 9"><path d="M1.5 4l2 3.500l4 -7" fill="none" stroke="#4a5f97" stroke-width="1.6"/></svg></div><div class="cb" style="left:1470px;top:579px;width:13px;height:13px;"><svg style="left:1px;top:1px" width="9" height="9" viewBox="0 0 9 9"><path d="M1.5 4l2 3.500l4 -7" fill="none" stroke="#4a5f97" stroke-width="1.6"/></svg></div><div class="cb" style="left:1491px;top:579px;width:13px;height:13px;"><svg style="left:1px;top:1px" width="9" height="9" viewBox="0 0 9 9"><path d="M1.5 4l2 3.500l4 -7" fill="none" stroke="#4a5f97" stroke-width="1.6"/></svg></div><div class="cb" style="left:1512px;top:579px;width:13px;height:13px;"><svg style="left:1px;top:1px" width="9" height="9" viewBox="0 0 9 9"><path d="M1.5 4l2 3.500l4 -7" fill="none" stroke="#4a5f97" stroke-width="1.6"/></svg></div><div style="left:1330px;top:601px;width:238px;height:241px;border:1px solid #828282;border-bottom:none"></div><div class="t" style="left:1332px;top:608px;width:60px;height:14px;font-size:11px;letter-spacing:-.15px;line-height:14px">Top</div><div class="bs" style="left:1409px;top:607px;width:12px;height:12px;"></div><div class="bs" style="left:1430px;top:607px;width:12px;height:12px;"></div><div class="bs" style="left:1451px;top:607px;width:12px;height:12px;"></div><div class="bs" style="left:1472px;top:607px;width:12px;height:12px;"></div><div class="bs" style="left:1493px;top:607px;width:12px;height:12px;"></div><div class="cb" style="left:1513px;top:607px;width:13px;height:13px;"></div><div class="t" style="left:1332px;top:630px;width:60px;height:14px;font-size:11px;letter-spacing:-.15px;line-height:14px">Bottom</div><div class="bs" style="left:1409px;top:629px;width:12px;height:12px;"></div><div class="bs" style="left:1430px;top:629px;width:12px;height:12px;"></div><div class="bs" style="left:1451px;top:629px;width:12px;height:12px;"></div><div class="bs" style="left:1472px;top:629px;width:12px;height:12px;"></div><div class="bs" style="left:1493px;top:629px;width:12px;height:12px;"></div><div class="cb" style="left:1513px;top:629px;width:13px;height:13px;"></div><div class="t" style="left:1332px;top:652px;width:60px;height:14px;font-size:11px;letter-spacing:-.15px;line-height:14px">All</div><div class="bs" style="left:1409px;top:651px;width:12px;height:12px;"></div><div class="bs" style="left:1493px;top:651px;width:12px;height:12px;"></div><div class="cb" style="left:1513px;top:651px;width:13px;height:13px;"></div><div style="left:85px;top:748px;width:986px;height:90px;border:1px solid #8c8c8c;background:#f0f0f0"></div><div style="left:86px;top:749px;width:16px;height:88px;background:linear-gradient(90deg,#e8e8e8,#d4d4d4 55%,#b4b4b4)"></div><div style="left:102px;top:749px;width:952px;height:83px;border:1px solid #828282;border-right-color:#ccc;border-bottom-color:#ccc;background:#fff"></div><div class="t" style="left:104px;top:750px;width:300px;height:12px;font-size:11px;letter-spacing:-.15px;line-height:12px;transform:scaleY(1.13)">Opening existing design...</div><div class="t" style="left:104px;top:763px;width:300px;height:12px;font-size:11px;letter-spacing:-.15px;line-height:12px;transform:scaleY(1.13)">Command &gt;</div><svg style="left:86px;top:752px" width="14" height="84" viewBox="0 0 14 84"><path d="M4.5 3l5 5M9.5 3l-5 5" stroke="#000" stroke-width="1.7"/><path d="M9 14.500v7l-4 -3.500z" fill="#000"/><path d="M3.5 33.500h5M3.5 36.500h5M3.5 33v4M9 31.500v7M9.5 35h3.5" stroke="#000" stroke-width="1" fill="none"/></svg><div class="t" style="left:86px;top:826px;width:35px;height:14px;font-size:11px;line-height:14px;overflow:hidden;transform-origin:0 0;transform:rotate(-90deg)">Command</div><div style="left:89px;top:830px;width:3px;height:3px;background:#3d95ff"></div><div style="left:94px;top:830px;width:3px;height:3px;background:#3d95ff"></div><svg style="left:1058px;top:754px" width="10" height="6" viewBox="0 0 10 6"><path d="M1 5l4 -4l4 4z" fill="#999"/></svg><svg style="left:1058px;top:820px" width="10" height="6" viewBox="0 0 10 6"><path d="M1 1l4 4l4 -4z" fill="#999"/></svg><div style="left:1077px;top:748px;width:246px;height:90px;border:1px solid #8c8c8c;border-right:none;background:#f0f0f0"></div><div style="left:1078px;top:749px;width:16px;height:88px;background:linear-gradient(90deg,#e8e8e8,#d4d4d4 55%,#b4b4b4)"></div><svg style="left:1078px;top:752px" width="14" height="84" viewBox="0 0 14 84"><path d="M4.5 3l5 5M9.5 3l-5 5" stroke="#000" stroke-width="1.7"/><path d="M9 14.500v7l-4 -3.500z" fill="#000"/><path d="M3.5 33.500h5M3.5 36.500h5M3.5 33v4M9 31.500v7M9.5 35h3.5" stroke="#000" stroke-width="1" fill="none"/></svg><div class="t" style="left:1078px;top:826px;width:35px;height:14px;font-size:11px;line-height:14px;overflow:hidden;transform-origin:0 0;transform:rotate(-90deg)">WorldView</div><div style="left:1081px;top:830px;width:3px;height:3px;background:#3d95ff"></div><div style="left:1086px;top:830px;width:3px;height:3px;background:#3d95ff"></div><div style="left:1095px;top:749px;width:228px;height:88px;border-style:solid;border-width:2px;border-color:#696969 #fff #fff #696969;background:#000"></div><svg style="left:1097px;top:751px" width="224" height="84" viewBox="1097 751 224 84" shape-rendering="crispEdges"><rect x="1131.5" y="752.5" width="154" height="78" fill="none" stroke="#6a8e3a"/><circle cx="1209" cy="791.5" r="38" fill="none" stroke="#c4c4c4"/></svg><div style="left:0px;top:842px;width:1600px;height:1px;background:#a0a0a0"></div><div style="left:0px;top:843px;width:1600px;height:17px;background:#f0f0f0"></div><div style="left:1px;top:844px;width:680px;height:15px;border-style:solid;border-width:1px;border-color:#a0a0a0 #fff #fff #a0a0a0;text-align:left;padding-left:2px"><div class="t" style="position:relative;font-size:11px;letter-spacing:-.15px;line-height:13px;transform:scaleY(1.13)">Idle</div></div><div style="left:683px;top:844px;width:54px;height:15px;background:#00ff00;border:1px solid #5a5a5a"></div><div style="left:740px;top:844px;width:129px;height:15px;border-style:solid;border-width:1px;border-color:#a0a0a0 #fff #fff #a0a0a0;text-align:center;"><div class="t" style="position:relative;font-size:11px;letter-spacing:-.15px;line-height:13px;transform:scaleY(1.13)"></div></div><div style="left:870px;top:844px;width:122px;height:15px;border-style:solid;border-width:1px;border-color:#a0a0a0 #fff #fff #a0a0a0;text-align:center;"><div class="t" style="position:relative;font-size:11px;letter-spacing:-.15px;line-height:13px;transform:scaleY(1.13)">Assembly_Top</div></div><div style="left:994px;top:844px;width:130px;height:15px;border-style:solid;border-width:1px;border-color:#a0a0a0 #fff #fff #a0a0a0;text-align:center;"><div class="t" style="position:relative;font-size:11px;letter-spacing:-.15px;line-height:13px;transform:scaleY(1.13)">363.00, 60.00</div></div><div style="left:1127px;top:844px;width:15px;height:15px;border:1px solid #444;background:#f4f4f4;font-size:11px;line-height:13px;text-align:center"><div class="t" style="position:relative;line-height:13px;transform:scaleY(1.13)">P</div></div><div style="left:1145px;top:844px;width:15px;height:15px;border:1px solid #444;background:#f4f4f4;font-size:11px;line-height:13px;text-align:center"><div class="t" style="position:relative;line-height:13px;transform:scaleY(1.13)">A</div></div><div style="left:1163px;top:844px;width:102px;height:15px;border-style:solid;border-width:1px;border-color:#a0a0a0 #fff #fff #a0a0a0;text-align:center;"><div class="t" style="position:relative;font-size:11px;letter-spacing:-.15px;line-height:13px;transform:scaleY(1.13)"></div></div><div style="left:1266px;top:844px;width:42px;height:15px;border-style:solid;border-width:1px;border-color:#a0a0a0 #fff #fff #a0a0a0;text-align:center;"><div class="t" style="position:relative;font-size:11px;letter-spacing:-.15px;line-height:13px;transform:scaleY(1.13)"></div></div><div style="left:1309px;top:844px;width:120px;height:15px;border-style:solid;border-width:1px;border-color:#a0a0a0 #fff #fff #a0a0a0;text-align:center;"><div class="t" style="position:relative;font-size:11px;letter-spacing:-.15px;line-height:13px;transform:scaleY(1.13)">Placement edit</div></div><div style="left:1431px;top:844px;width:72px;height:15px;border-style:solid;border-width:1px;border-color:#a0a0a0 #fff #fff #a0a0a0;text-align:center;"><div class="t" style="position:relative;font-size:11px;letter-spacing:-.15px;line-height:13px;transform:scaleY(1.13)">Off</div></div><div class="t" style="left:1505px;top:844px;width:51px;height:15px;background:#00ff00;border:1px solid #3a3;font-size:11px;letter-spacing:-.15px;line-height:13px;text-align:center">DRC</div><div style="left:1558px;top:844px;width:40px;height:15px;border-style:solid;border-width:1px;border-color:#a0a0a0 #fff #fff #a0a0a0;text-align:center;"><div class="t" style="position:relative;font-size:11px;letter-spacing:-.15px;line-height:13px;transform:scaleY(1.13)">0</div></div><svg style="left:1470px;top:830px" width="110" height="34" viewBox="1470 830 110 34"><g fill="none" stroke="#1a5fb4" stroke-width="2"><path d="M1483 839.500H1512L1530 850H1552M1493 847H1505L1521 857H1561L1568 850"/></g><g fill="#fff" stroke="#f0a020" stroke-width="2.4"><circle cx="1483" cy="839.5" r="3.5"/><circle cx="1493" cy="847" r="3.5"/><circle cx="1552" cy="850" r="3.5"/><circle cx="1568" cy="850" r="3.5"/></g></svg><div style="left:0px;top:860px;width:1600px;height:40px;background:linear-gradient(90deg,#050505 0,#060606 494px,#a8aac0 507px,#b2b4cc 640px,#b0b0c6 780px,#c4c4d4 860px,#b8b4bc 930px,#b6b2b6 1000px,#b0acb0 1092px,#0a0a0a 1103px,#050505 1600px)"></div><div style="left:0px;top:860px;width:1600px;height:2px;background:linear-gradient(#9a9a9a,rgba(60,60,60,.6))"></div><div style="left:772px;top:859px;width:32px;height:13px;background:radial-gradient(ellipse at center,rgba(190,80,100,.7),rgba(190,80,100,0) 70%)"></div><div style="left:9px;top:862px;width:37px;height:37px;border-radius:50%;background:radial-gradient(circle at 50% 105%,#6ad8f8 0,#2a98d8 22%,rgba(20,80,150,0) 55%),radial-gradient(circle at 50% 35%,#5a9ad0 0,#2a6aa8 40%,#123c70 75%,#0a2448 100%);box-shadow:0 0 0 1px #3a6a98"></div><div style="left:12px;top:863px;width:31px;height:16px;border-radius:16px 16px 12px 12px / 14px 14px 6px 6px;background:linear-gradient(rgba(255,255,255,.45),rgba(255,255,255,.05))"></div><svg style="left:15px;top:867px" width="26" height="26" viewBox="0 0 26 26"><path d="M3.5 4.500c3 -2,6 -2,8.5 0l-2 7.500c-3 -2,-6 -2,-8.5 0z" fill="#f0602a"/><path d="M13.5 5c3 2,6 2,9 0l-2 7.500c-3 2,-6 2,-9 0z" fill="#8cc82a"/><path d="M1 14c3 -2,6 -2,8.5 0l-2 7.500c-3 -2,-6 -2,-8.5 0z" fill="#3aa0f0"/><path d="M11 14.500c3 2,6 2,9 0l-2 7.500c-3 2,-6 2,-9 0z" fill="#f8c828"/></svg><div style="left:60px;top:861px;width:51px;height:38px;border:1px solid #a0a0a0;border-radius:3px;background:linear-gradient(#555,#333 48%,#141414 52%,#222);box-shadow:inset 0 0 0 1px #000"></div><div style="left:112px;top:862px;width:1px;height:37px;background:#777"></div><div style="left:115px;top:862px;width:1px;height:37px;background:#555"></div><svg style="left:66px;top:862px" width="40" height="36" viewBox="66 862 40 36"><ellipse cx="86" cy="880" rx="18" ry="7.5" transform="rotate(-40 86 880)" fill="none" stroke="#f0b810" stroke-width="2.6"/></svg><div class="t" style="left:66px;top:855px;width:40px;height:44px;font-size:50px;line-height:44px;font-weight:bold;color:#2aa4ec;text-align:center;text-shadow:0 0 1px #7ad8ff">e</div><svg style="left:66px;top:862px" width="40" height="36" viewBox="66 862 40 36"><path d="M73.5 884c-1 -8,8 -17,19 -18.5" fill="none" stroke="#f8c820" stroke-width="2.6" stroke-linecap="round"/></svg><svg style="left:133px;top:864px" width="36" height="34" viewBox="0 0 36 34"><path d="M2.5 6.500h10l2 3h18v20h-30z" fill="#f4e4a4" stroke="#d4bc6c"/><path d="M13 9.500h9l2 -2.500h9v4h-20z" fill="#fbf0c4" stroke="#d4bc6c"/><path d="M2.5 13h30.500v17h-30.500z" fill="#f8e8ac" stroke="#d8c070"/><rect x="6" y="4" width="3" height="2" fill="#2a2"/><rect x="14" y="6.5" width="3" height="2" fill="#c22"/><rect x="22" y="8.5" width="3" height="2" fill="#28c"/><rect x="25" y="8.5" width="6" height="2" fill="#fff"/><path d="M7 33v-9c0 -2,1 -3,3 -3h17c2 0,3 1,3 3v9h-5v-6h-13v6z" fill="#8cc8ec" stroke="#4a94cc"/></svg><svg style="left:197px;top:866px" width="30" height="30" viewBox="0 0 30 30"><path d="M8 2h19l-1 24h-17z" fill="#6aa4cc" stroke="#4a84b4"/><path d="M5 3h19l-1 24h-17z" fill="#8abce0" stroke="#4a84b4"/><path d="M2 4l20 0v22l-20 -2z" fill="#a4cce8" stroke="#5a94c4"/><circle cx="11.5" cy="15" r="8.5" fill="#f07818" stroke="#f8a868" stroke-width="1"/><path d="M8.5 10l9 5l-9 5z" fill="#fff"/></svg><svg style="left:258px;top:864px" width="34" height="34" viewBox="0 0 34 34"><rect x="14" y="5" width="17" height="24" fill="#fff" stroke="#2a5699" stroke-width="1.2"/><path d="M21 9h8M21 12h8M21 15h8M21 18h8M21 21h8M21 24h8" stroke="#2a5699" stroke-width="1.5"/><path d="M2 5l18 -4v32l-18 -4z" fill="#2a5699"/><text x="10.5" y="23" text-anchor="middle" font-family="Liberation Sans,sans-serif" font-weight="bold" font-size="14.5" fill="#fff">W</text></svg><svg style="left:320px;top:864px" width="34" height="34" viewBox="0 0 34 34"><rect x="14" y="5" width="17" height="24" fill="#fff" stroke="#1f7044" stroke-width="1.2"/><path d="M21 8h9M21 12h9M21 16h9M21 20h9M21 24h9M25 6v22" stroke="#1f7044" stroke-width="1.3"/><path d="M2 5l18 -4v32l-18 -4z" fill="#1f7044"/><text x="10.5" y="23" text-anchor="middle" font-family="Liberation Sans,sans-serif" font-weight="bold" font-size="14.5" fill="#fff">X</text></svg><svg style="left:382px;top:864px" width="34" height="34" viewBox="0 0 34 34"><rect x="14" y="5" width="17" height="24" fill="#fff" stroke="#d04424" stroke-width="1.2"/><circle cx="25" cy="12" r="4" fill="none" stroke="#d04424" stroke-width="1.5"/><path d="M21 20h9M21 24h9" stroke="#d04424" stroke-width="1.5"/><path d="M2 5l18 -4v32l-18 -4z" fill="#d04424"/><text x="10.5" y="23" text-anchor="middle" font-family="Liberation Sans,sans-serif" font-weight="bold" font-size="14.5" fill="#fff">P</text></svg><svg style="left:444px;top:864px" width="34" height="34" viewBox="0 0 34 34"><rect x="14" y="5" width="17" height="24" fill="#fff" stroke="#7a3a80" stroke-width="1.2"/><path d="M21 9h8M21 13h8M21 17h8M21 21h8M21 25h8" stroke="#7a3a80" stroke-width="1.5"/><rect x="29" y="6" width="3" height="22" fill="#9a5aa0"/><path d="M2 5l18 -4v32l-18 -4z" fill="#7a3a80"/><text x="10.5" y="23" text-anchor="middle" font-family="Liberation Sans,sans-serif" font-weight="bold" font-size="14.5" fill="#fff">N</text></svg><svg style="left:506px;top:864px" width="36" height="34" viewBox="0 0 36 34"><rect x="16" y="9" width="17" height="15" fill="#fff" stroke="#0a6cc8" stroke-width="1.3"/><path d="M16 10l8.5 7l8.5 -7" fill="none" stroke="#0a6cc8" stroke-width="1.8"/><path d="M2 5l18 -4v32l-18 -4z" fill="#0a6cc8"/><text x="11" y="22.5" text-anchor="middle" font-family="Liberation Sans,sans-serif" font-weight="bold" font-size="15" fill="#fff">O</text></svg><div style="left:556px;top:861px;width:59px;height:38px;border:1px solid #f4f4f8;border-radius:3px;background:linear-gradient(#e8e8ee,#d8d8e2 48%,#c8c8d6 52%,#d0d0dc);box-shadow:0 0 0 1px rgba(60,60,80,.5)"></div><svg style="left:569px;top:864px" width="32" height="32" viewBox="0 0 32 32"><g stroke="#0d0" stroke-width="2.6" fill="none"><path d="M4 4h7l9 9h8M4 14h8l8 7h8M4 24h7l5 -5M16 24l4 4h8M12 14l6 -6"/></g><g fill="#1e1"><circle cx="4" cy="4" r="3.2"/><circle cx="4" cy="14" r="3.2"/><circle cx="4" cy="24" r="3.2"/><circle cx="28" cy="13" r="3.2"/><circle cx="28" cy="21" r="3.2"/><circle cx="28" cy="28.5" r="3.2"/></g><path d="M3 27l24 -18" stroke="#e00" stroke-width="2.6"/><text x="11" y="25" font-family="Liberation Serif,serif" font-style="italic" font-weight="bold" font-size="24" fill="#e01010">A</text></svg><svg style="left:1255px;top:868px" width="20" height="20" viewBox="0 0 20 20"><rect x="2" y="8" width="15" height="9" rx="1.5" fill="none" stroke="#ccc" stroke-width="1.2"/><path d="M4 11h11M4 13.500h11" stroke="#ccc" stroke-width="1" stroke-dasharray="1.5 1"/><path d="M9 8c0 -3,3 -3,5 -5" fill="none" stroke="#ccc"/></svg><div style="left:1283px;top:862px;width:320px;height:38px;border-radius:14px 0 0 0;background:linear-gradient(#2a2a2a,#0c0c0c 30%,#000);border-top:1px solid #555;border-left:1px solid #444"></div><div class="t" style="left:1297px;top:870px;width:45px;height:20px;border:1px solid #8f8;background:linear-gradient(#3aa84a,#1a7a2a 50%,#0c5a1c);color:#fff;font-size:13px;line-height:18px;text-align:center">96%</div><div style="left:1342px;top:876px;width:3px;height:8px;border:1px solid #8f8;border-left:none"></div><svg style="left:1356px;top:872px" width="20" height="16" viewBox="0 0 20 16"><path d="M16 3h-8a5 5 0 0 0 0 10h8v-3h-5v-4h5z" fill="none" stroke="#ddd" stroke-width="1.5"/></svg><svg style="left:1392px;top:876px" width="10" height="6" viewBox="0 0 10 6"><path d="M1 5.500l4 -5l4 5z" fill="#eee"/></svg><svg style="left:1412px;top:870px" width="20" height="20" viewBox="0 0 20 20"><rect x="3" y="4" width="8" height="12" fill="none" stroke="#eee" stroke-width="1.5"/><path d="M9 6h8v4a4 4 0 0 1 -8 0zM13 14v4M11 3v3M15 3v3" stroke="#fff" stroke-width="1.5" fill="#ddd"/></svg><svg style="left:1437px;top:871px" width="18" height="18" viewBox="0 0 18 18"><path d="M2 7h3l4 -4v12l-4 -4h-3z" fill="#eee"/><path d="M11 6c1.5 2,1.5 4,0 6M13.5 4c2.5 3,2.5 7,0 10" fill="none" stroke="#ddd" stroke-width="1.2"/></svg><svg style="left:1461px;top:870px" width="18" height="20" viewBox="0 0 18 20"><path d="M3 2v16" stroke="#fff" stroke-width="1.8"/><path d="M4 3c3 -1,5 2,9 0v8c-4 2,-6 -1,-9 0z" fill="#eee"/></svg><svg style="left:1489px;top:872px" width="22" height="18" viewBox="0 0 22 18"><rect x="6" y="3" width="12" height="10" fill="none" stroke="#ddd" stroke-width="1.3"/><path d="M2 8h6M10 1v16" stroke="#ddd" stroke-width="1.3"/></svg><div class="t" style="left:1500px;top:865px;width:96px;height:12px;font-size:12px;line-height:12px;color:#fff;text-align:center">19:12</div><div class="t" style="left:1500px;top:882px;width:96px;height:12px;font-size:12px;line-height:12px;color:#fff;text-align:center">2017/9/16</div><div class="t" style="left:1474px;top:862px;width:115px;height:32px;font-size:29.500px;line-height:32px;color:#1a5fb4">EDA365</div><div style="left:1587px;top:862px;width:13px;height:38px;border-left:1px solid #777;background:linear-gradient(90deg,#333,#111)"></div></body></html>
